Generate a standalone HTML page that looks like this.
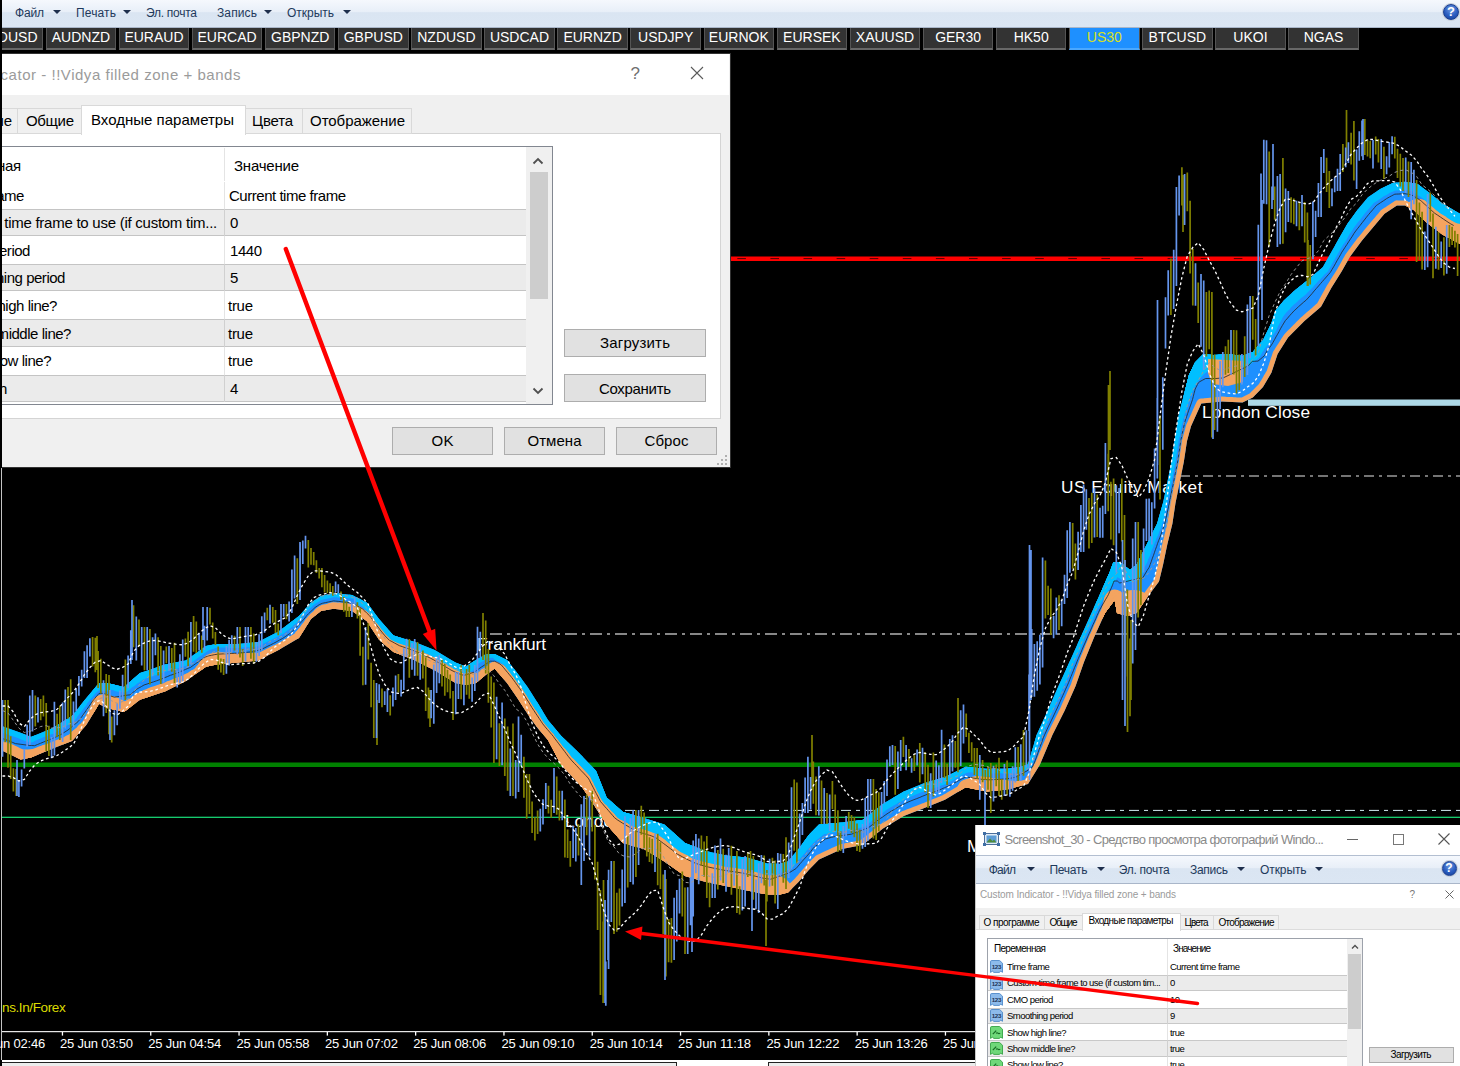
<!DOCTYPE html>
<html lang="ru"><head><meta charset="utf-8"><title>US30 chart</title>
<style>
html,body{margin:0;padding:0;}
body{width:1460px;height:1066px;overflow:hidden;background:#000;position:relative;font-family:"Liberation Sans", sans-serif;}
div,span{box-sizing:border-box;}
.abs{position:absolute;}
svg{position:absolute;left:0;top:0;}
</style></head><body>
<div style="position:absolute;left:1.1px;top:468px;width:1.1px;height:592px;background:#c4c4c4;"></div><div style="position:absolute;left:2px;top:0px;width:1458px;height:27.5px;background:linear-gradient(#f5f8fd 0%,#e8eff8 43%,#dae5f2 47%,#dbe6f3 100%);border-bottom:1px solid #a9b6c9;"></div><span style="position:absolute;left:15px;top:5.0px;font-size:12px;line-height:16px;color:#1e395b;letter-spacing:-0.172px;white-space:nowrap;">Файл</span><span style="position:absolute;left:76px;top:5.0px;font-size:12px;line-height:16px;color:#1e395b;letter-spacing:0.138px;white-space:nowrap;">Печать</span><span style="position:absolute;left:146px;top:5.0px;font-size:12px;line-height:16px;color:#1e395b;letter-spacing:-0.262px;white-space:nowrap;">Эл. почта</span><span style="position:absolute;left:217px;top:5.0px;font-size:12px;line-height:16px;color:#1e395b;letter-spacing:0.125px;white-space:nowrap;">Запись</span><span style="position:absolute;left:287px;top:5.0px;font-size:12px;line-height:16px;color:#1e395b;letter-spacing:-0.023px;white-space:nowrap;">Открыть</span><div style="position:absolute;left:53px;top:9.8px;width:0;height:0;border-left:4px solid transparent;border-right:4px solid transparent;border-top:4.5px solid #1e2f4d;"></div><div style="position:absolute;left:123px;top:9.8px;width:0;height:0;border-left:4px solid transparent;border-right:4px solid transparent;border-top:4.5px solid #1e2f4d;"></div><div style="position:absolute;left:264px;top:9.8px;width:0;height:0;border-left:4px solid transparent;border-right:4px solid transparent;border-top:4.5px solid #1e2f4d;"></div><div style="position:absolute;left:343px;top:9.8px;width:0;height:0;border-left:4px solid transparent;border-right:4px solid transparent;border-top:4.5px solid #1e2f4d;"></div><div style="position:absolute;left:1443px;top:4px;width:16px;height:16px;border-radius:50%;background:radial-gradient(circle at 50% 30%,#6f9be0 0%,#2a5cc0 55%,#153d95 100%);border:1px solid #1b3f8f;box-shadow:0 0 0 1px #c4ccd8;color:#fff;font-weight:bold;font-size:13px;line-height:14px;text-align:center;">?</div><div style="position:absolute;left:2px;top:28px;width:40.5px;height:22px;background:#333333;border-bottom:2px solid #686868;border-right:1px solid #555;overflow:hidden;"><span style="position:absolute;right:4px;top:0px;font-size:14px;line-height:19px;color:#fff;white-space:nowrap;">AUDUSD</span></div><div style="position:absolute;left:45.6px;top:28px;width:70.6px;height:22px;background:#333333;border-bottom:2px solid #686868;border-left:1px solid #555;border-right:1px solid #555;text-align:center;font-size:14px;line-height:19px;color:#ffffff;">AUDNZD</div><div style="position:absolute;left:118.7px;top:28px;width:70.6px;height:22px;background:#333333;border-bottom:2px solid #686868;border-left:1px solid #555;border-right:1px solid #555;text-align:center;font-size:14px;line-height:19px;color:#ffffff;">EURAUD</div><div style="position:absolute;left:191.8px;top:28px;width:70.6px;height:22px;background:#333333;border-bottom:2px solid #686868;border-left:1px solid #555;border-right:1px solid #555;text-align:center;font-size:14px;line-height:19px;color:#ffffff;">EURCAD</div><div style="position:absolute;left:264.9px;top:28px;width:70.6px;height:22px;background:#333333;border-bottom:2px solid #686868;border-left:1px solid #555;border-right:1px solid #555;text-align:center;font-size:14px;line-height:19px;color:#ffffff;">GBPNZD</div><div style="position:absolute;left:338.0px;top:28px;width:70.6px;height:22px;background:#333333;border-bottom:2px solid #686868;border-left:1px solid #555;border-right:1px solid #555;text-align:center;font-size:14px;line-height:19px;color:#ffffff;">GBPUSD</div><div style="position:absolute;left:411.1px;top:28px;width:70.6px;height:22px;background:#333333;border-bottom:2px solid #686868;border-left:1px solid #555;border-right:1px solid #555;text-align:center;font-size:14px;line-height:19px;color:#ffffff;">NZDUSD</div><div style="position:absolute;left:484.2px;top:28px;width:70.6px;height:22px;background:#333333;border-bottom:2px solid #686868;border-left:1px solid #555;border-right:1px solid #555;text-align:center;font-size:14px;line-height:19px;color:#ffffff;">USDCAD</div><div style="position:absolute;left:557.3px;top:28px;width:70.6px;height:22px;background:#333333;border-bottom:2px solid #686868;border-left:1px solid #555;border-right:1px solid #555;text-align:center;font-size:14px;line-height:19px;color:#ffffff;">EURNZD</div><div style="position:absolute;left:630.4px;top:28px;width:70.6px;height:22px;background:#333333;border-bottom:2px solid #686868;border-left:1px solid #555;border-right:1px solid #555;text-align:center;font-size:14px;line-height:19px;color:#ffffff;">USDJPY</div><div style="position:absolute;left:703.5px;top:28px;width:70.6px;height:22px;background:#333333;border-bottom:2px solid #686868;border-left:1px solid #555;border-right:1px solid #555;text-align:center;font-size:14px;line-height:19px;color:#ffffff;">EURNOK</div><div style="position:absolute;left:776.6px;top:28px;width:70.6px;height:22px;background:#333333;border-bottom:2px solid #686868;border-left:1px solid #555;border-right:1px solid #555;text-align:center;font-size:14px;line-height:19px;color:#ffffff;">EURSEK</div><div style="position:absolute;left:849.7px;top:28px;width:70.6px;height:22px;background:#333333;border-bottom:2px solid #686868;border-left:1px solid #555;border-right:1px solid #555;text-align:center;font-size:14px;line-height:19px;color:#ffffff;">XAUUSD</div><div style="position:absolute;left:922.8px;top:28px;width:70.6px;height:22px;background:#333333;border-bottom:2px solid #686868;border-left:1px solid #555;border-right:1px solid #555;text-align:center;font-size:14px;line-height:19px;color:#ffffff;">GER30</div><div style="position:absolute;left:995.9px;top:28px;width:70.6px;height:22px;background:#333333;border-bottom:2px solid #686868;border-left:1px solid #555;border-right:1px solid #555;text-align:center;font-size:14px;line-height:19px;color:#ffffff;">HK50</div><div style="position:absolute;left:1069.0px;top:28px;width:70.6px;height:22px;background:#1e90ff;border-bottom:2px solid #4aa8ff;border-left:1px solid #555;border-right:1px solid #555;text-align:center;font-size:14px;line-height:19px;color:#d8e020;">US30</div><div style="position:absolute;left:1142.1px;top:28px;width:70.6px;height:22px;background:#333333;border-bottom:2px solid #686868;border-left:1px solid #555;border-right:1px solid #555;text-align:center;font-size:14px;line-height:19px;color:#ffffff;">BTCUSD</div><div style="position:absolute;left:1215.2px;top:28px;width:70.6px;height:22px;background:#333333;border-bottom:2px solid #686868;border-left:1px solid #555;border-right:1px solid #555;text-align:center;font-size:14px;line-height:19px;color:#ffffff;">UKOI</div><div style="position:absolute;left:1288.3px;top:28px;width:70.6px;height:22px;background:#333333;border-bottom:2px solid #686868;border-left:1px solid #555;border-right:1px solid #555;text-align:center;font-size:14px;line-height:19px;color:#ffffff;">NGAS</div><div style="position:absolute;left:2px;top:1059.7px;width:973px;height:6.3px;background:#fff;"></div><div style="position:absolute;left:2px;top:1062px;width:675px;height:4px;border-top:1.6px solid #222;border-right:1.7px solid #222;background:#ececec;"></div><div style="position:absolute;left:768.2px;top:1062px;width:206.8px;height:4px;border-top:1.6px solid #222;border-left:1.7px solid #222;background:#ececec;"></div><svg width="1460" height="1066" viewBox="0 0 1460 1066" style="z-index:1"><rect x="730" y="256.5" width="730" height="4.5" fill="#ff0000"/><line x1="737.3" y1="258.6" x2="1460" y2="258.6" stroke="#4a0000" stroke-width="1" stroke-dasharray="8.6 24.5"/><rect x="2" y="762.5" width="1458" height="4.5" fill="#008000"/><rect x="2" y="816.7" width="1458" height="1.2" fill="#19e07a"/><rect x="1248" y="399.5" width="212" height="6.3" fill="#add8e6"/><line x1="490" y1="634" x2="1460" y2="634" stroke="#b4b4b4" stroke-width="1.6" stroke-dasharray="12 5 3 5"/><line x1="625" y1="810.4" x2="1460" y2="810.4" stroke="#d4ecf4" stroke-width="1" stroke-dasharray="10 5 4 5"/><line x1="1180" y1="476" x2="1460" y2="476" stroke="#e8e8e8" stroke-width="1.1" stroke-dasharray="10 5 3 5"/><clipPath id="bandclip"><polygon points="2.0,726.0 3.0,726.5 20.6,732.7 31.0,737.0 51.6,728.6 72.0,716.0 86.7,697.6 99.0,683.0 107.0,683.0 124.0,687.0 140.0,673.0 165.0,664.6 185.7,660.5 206.0,646.0 216.6,644.0 237.0,644.0 258.0,642.0 278.5,631.6 299.0,616.0 311.0,602.5 321.0,596.0 333.6,593.0 352.0,595.0 366.7,602.5 379.0,619.0 393.5,635.5 414.0,641.7 434.7,650.0 455.4,662.4 465.7,666.5 476.0,660.0 486.0,654.0 494.6,654.0 507.0,660.0 517.0,672.7 527.6,687.0 538.0,703.6 548.0,720.0 561.0,735.7 582.0,756.0 596.0,770.8 606.7,797.6 623.0,812.0 643.8,818.0 664.4,824.4 685.0,843.0 705.7,851.0 726.0,855.4 747.0,857.4 767.6,863.6 780.0,864.0 788.0,861.6 798.5,849.0 809.0,834.7 819.0,824.4 842.0,822.4 862.5,820.0 883.0,803.8 903.8,791.4 924.4,783.0 945.0,777.0 965.7,766.7 986.0,768.7 1007.0,768.7 1020.0,767.0 1028.0,764.4 1036.6,735.0 1047.6,710.7 1058.5,686.0 1069.5,662.0 1080.5,637.6 1091.5,613.0 1102.4,588.8 1109.8,571.7 1113.4,562.0 1120.0,562.0 1130.0,570.0 1136.6,564.4 1146.7,544.4 1157.0,523.8 1163.0,503.0 1167.3,482.5 1171.4,462.0 1174.5,441.0 1178.6,416.0 1183.7,395.4 1189.0,374.7 1195.0,362.4 1203.3,354.0 1213.6,355.0 1228.0,354.0 1242.5,356.0 1252.8,352.0 1263.0,339.7 1271.4,323.0 1275.5,310.8 1283.8,300.5 1294.0,291.0 1308.0,280.0 1322.6,267.5 1330.8,253.0 1339.0,238.6 1347.3,224.0 1357.6,209.7 1368.0,197.3 1380.3,189.0 1392.7,182.9 1405.0,181.8 1417.5,183.9 1430.0,193.2 1442.3,203.5 1460.0,213.8 1460.0,244.0 1442.3,234.5 1425.8,222.0 1413.4,209.7 1405.0,205.6 1396.9,205.6 1384.5,213.8 1372.5,228.0 1362.0,240.6 1349.8,257.0 1341.6,271.6 1331.3,288.0 1321.0,306.7 1304.4,321.0 1288.0,337.6 1277.6,354.0 1271.4,372.7 1263.0,387.0 1252.8,397.4 1242.5,402.6 1222.0,401.6 1201.3,403.6 1191.0,426.3 1187.0,441.0 1183.8,462.0 1179.7,482.5 1175.5,503.0 1172.4,523.8 1167.3,544.4 1163.0,565.0 1159.0,581.6 1146.7,598.0 1136.6,613.0 1127.0,616.0 1117.0,613.0 1114.6,600.0 1105.0,613.0 1094.0,637.6 1084.0,662.0 1075.6,686.0 1064.6,710.7 1052.4,735.0 1040.0,764.4 1028.0,784.0 1020.0,786.0 1007.0,789.4 986.0,791.4 965.7,787.3 945.0,799.7 924.4,808.0 903.8,816.0 883.0,828.6 862.5,845.0 842.0,849.0 819.0,859.5 809.0,869.8 798.5,882.0 788.0,892.5 780.0,894.6 767.6,894.6 747.0,890.5 726.0,886.0 705.7,882.0 685.0,876.0 664.4,861.6 643.8,849.0 623.0,843.0 606.7,824.4 596.0,808.0 582.0,787.0 561.0,764.6 548.0,740.0 538.0,728.4 527.6,714.0 517.0,697.4 507.0,683.0 494.6,668.5 486.0,674.7 476.0,683.0 465.7,685.0 455.4,683.0 434.7,670.6 414.0,660.0 393.5,652.0 379.0,639.7 366.7,621.0 352.0,611.0 333.6,608.7 321.0,611.0 311.0,619.0 299.0,638.0 278.5,650.0 258.0,660.5 237.0,662.5 216.6,664.6 206.0,666.7 185.7,681.0 165.0,691.4 140.0,699.7 124.0,712.0 107.0,708.0 99.0,703.8 86.7,724.4 72.0,741.0 51.6,749.0 31.0,757.4 20.6,759.5 3.0,751.0 2.0,751.0"/></clipPath><polygon points="2.0,726.0 3.0,726.5 20.6,732.7 31.0,737.0 51.6,728.6 72.0,716.0 86.7,697.6 99.0,683.0 107.0,683.0 124.0,687.0 140.0,673.0 165.0,664.6 185.7,660.5 206.0,646.0 216.6,644.0 237.0,644.0 258.0,642.0 278.5,631.6 299.0,616.0 311.0,602.5 321.0,596.0 333.6,593.0 352.0,595.0 366.7,602.5 379.0,619.0 393.5,635.5 414.0,641.7 434.7,650.0 455.4,662.4 465.7,666.5 476.0,660.0 486.0,654.0 494.6,654.0 507.0,660.0 517.0,672.7 527.6,687.0 538.0,703.6 548.0,720.0 561.0,735.7 582.0,756.0 596.0,770.8 606.7,797.6 623.0,812.0 643.8,818.0 664.4,824.4 685.0,843.0 705.7,851.0 726.0,855.4 747.0,857.4 767.6,863.6 780.0,864.0 788.0,861.6 798.5,849.0 809.0,834.7 819.0,824.4 842.0,822.4 862.5,820.0 883.0,803.8 903.8,791.4 924.4,783.0 945.0,777.0 965.7,766.7 986.0,768.7 1007.0,768.7 1020.0,767.0 1028.0,764.4 1036.6,735.0 1047.6,710.7 1058.5,686.0 1069.5,662.0 1080.5,637.6 1091.5,613.0 1102.4,588.8 1109.8,571.7 1113.4,562.0 1120.0,562.0 1130.0,570.0 1136.6,564.4 1146.7,544.4 1157.0,523.8 1163.0,503.0 1167.3,482.5 1171.4,462.0 1174.5,441.0 1178.6,416.0 1183.7,395.4 1189.0,374.7 1195.0,362.4 1203.3,354.0 1213.6,355.0 1228.0,354.0 1242.5,356.0 1252.8,352.0 1263.0,339.7 1271.4,323.0 1275.5,310.8 1283.8,300.5 1294.0,291.0 1308.0,280.0 1322.6,267.5 1330.8,253.0 1339.0,238.6 1347.3,224.0 1357.6,209.7 1368.0,197.3 1380.3,189.0 1392.7,182.9 1405.0,181.8 1417.5,183.9 1430.0,193.2 1442.3,203.5 1460.0,213.8 1460.0,244.0 1442.3,234.5 1425.8,222.0 1413.4,209.7 1405.0,205.6 1396.9,205.6 1384.5,213.8 1372.5,228.0 1362.0,240.6 1349.8,257.0 1341.6,271.6 1331.3,288.0 1321.0,306.7 1304.4,321.0 1288.0,337.6 1277.6,354.0 1271.4,372.7 1263.0,387.0 1252.8,397.4 1242.5,402.6 1222.0,401.6 1201.3,403.6 1191.0,426.3 1187.0,441.0 1183.8,462.0 1179.7,482.5 1175.5,503.0 1172.4,523.8 1167.3,544.4 1163.0,565.0 1159.0,581.6 1146.7,598.0 1136.6,613.0 1127.0,616.0 1117.0,613.0 1114.6,600.0 1105.0,613.0 1094.0,637.6 1084.0,662.0 1075.6,686.0 1064.6,710.7 1052.4,735.0 1040.0,764.4 1028.0,784.0 1020.0,786.0 1007.0,789.4 986.0,791.4 965.7,787.3 945.0,799.7 924.4,808.0 903.8,816.0 883.0,828.6 862.5,845.0 842.0,849.0 819.0,859.5 809.0,869.8 798.5,882.0 788.0,892.5 780.0,894.6 767.6,894.6 747.0,890.5 726.0,886.0 705.7,882.0 685.0,876.0 664.4,861.6 643.8,849.0 623.0,843.0 606.7,824.4 596.0,808.0 582.0,787.0 561.0,764.6 548.0,740.0 538.0,728.4 527.6,714.0 517.0,697.4 507.0,683.0 494.6,668.5 486.0,674.7 476.0,683.0 465.7,685.0 455.4,683.0 434.7,670.6 414.0,660.0 393.5,652.0 379.0,639.7 366.7,621.0 352.0,611.0 333.6,608.7 321.0,611.0 311.0,619.0 299.0,638.0 278.5,650.0 258.0,660.5 237.0,662.5 216.6,664.6 206.0,666.7 185.7,681.0 165.0,691.4 140.0,699.7 124.0,712.0 107.0,708.0 99.0,703.8 86.7,724.4 72.0,741.0 51.6,749.0 31.0,757.4 20.6,759.5 3.0,751.0 2.0,751.0" fill="#1e90ff"/><g clip-path="url(#bandclip)"><path d="M309.3 621.7L311.0 619.0M311.0 619.0L313.5 617.0" stroke="#f4a460" stroke-width="8.0" stroke-linecap="round" fill="none"/><path d="M305.9 627.1L307.6 624.4M307.6 624.4L309.3 621.7M313.5 617.0L316.0 615.0M316.0 615.0L318.5 613.0" stroke="#f4a460" stroke-width="9.0" stroke-linecap="round" fill="none"/><path d="M82.5 729.1L84.6 726.8M84.6 726.8L86.7 724.4M86.7 724.4L88.5 721.5M88.5 721.5L90.2 718.5M90.2 718.5L92.0 715.6M193.3 675.6L195.8 673.9M195.8 673.9L198.4 672.1M198.4 672.1L200.9 670.3M302.4 632.6L304.1 629.9M304.1 629.9L305.9 627.1M318.5 613.0L321.0 611.0M321.0 611.0L324.1 610.4M780.0 894.6L784.0 893.5M784.0 893.5L788.0 892.5M788.0 892.5L790.6 889.9M790.6 889.9L793.2 887.2M793.2 887.2L795.9 884.6M795.9 884.6L798.5 882.0M798.5 882.0L800.6 879.6M800.6 879.6L802.7 877.1M802.7 877.1L804.8 874.7M804.8 874.7L806.9 872.2M806.9 872.2L809.0 869.8M809.0 869.8L811.5 867.2M811.5 867.2L814.0 864.6M814.0 864.6L816.5 862.1M816.5 862.1L819.0 859.5M819.0 859.5L821.9 858.2M821.9 858.2L824.8 856.9M824.8 856.9L827.6 855.6M827.6 855.6L830.5 854.2M830.5 854.2L833.4 852.9M833.4 852.9L836.2 851.6M836.2 851.6L839.1 850.3M839.1 850.3L842.0 849.0M842.0 849.0L845.4 848.3M845.4 848.3L848.8 847.7M848.8 847.7L852.2 847.0M852.2 847.0L855.7 846.3M855.7 846.3L859.1 845.7M859.1 845.7L862.5 845.0M862.5 845.0L865.1 843.0M865.1 843.0L867.6 840.9M867.6 840.9L870.2 838.9M870.2 838.9L872.8 836.8M872.8 836.8L875.3 834.8M875.3 834.8L877.9 832.7M877.9 832.7L880.4 830.6M880.4 830.6L883.0 828.6M883.0 828.6L885.6 827.0M885.6 827.0L888.2 825.5M888.2 825.5L890.8 823.9M890.8 823.9L893.4 822.3M893.4 822.3L896.0 820.7M896.0 820.7L898.6 819.1M898.6 819.1L901.2 817.6M901.2 817.6L903.8 816.0M903.8 816.0L906.7 814.9M906.7 814.9L909.7 813.7M909.7 813.7L912.6 812.6M912.6 812.6L915.6 811.4M915.6 811.4L918.5 810.3M918.5 810.3L921.5 809.1M921.5 809.1L924.4 808.0M924.4 808.0L927.3 806.8M927.3 806.8L930.3 805.6M930.3 805.6L933.2 804.4M933.2 804.4L936.2 803.3M936.2 803.3L939.1 802.1M939.1 802.1L942.1 800.9M942.1 800.9L945.0 799.7M945.0 799.7L947.6 798.2M947.6 798.2L950.2 796.6M950.2 796.6L952.8 795.0M952.8 795.0L955.4 793.5M955.4 793.5L957.9 792.0M957.9 792.0L960.5 790.4M960.5 790.4L963.1 788.8M1020.0 786.0L1024.0 785.0M1024.0 785.0L1028.0 784.0M1028.0 784.0L1029.7 781.2M1029.7 781.2L1031.4 778.4M1031.4 778.4L1033.1 775.6M1033.1 775.6L1034.9 772.8M1034.9 772.8L1036.6 770.0M1036.6 770.0L1038.3 767.2M1038.3 767.2L1040.0 764.4M1040.0 764.4L1041.2 761.5M1041.2 761.5L1042.5 758.5M1042.5 758.5L1043.7 755.6M1043.7 755.6L1045.0 752.6M1045.0 752.6L1046.2 749.7M1046.2 749.7L1047.4 746.8M1047.4 746.8L1048.7 743.8M1048.7 743.8L1049.9 740.9M1049.9 740.9L1051.2 737.9M1051.2 737.9L1052.4 735.0M1052.4 735.0L1053.8 732.3M1053.8 732.3L1055.1 729.6M1055.1 729.6L1056.5 726.9M1056.5 726.9L1057.8 724.2M1057.8 724.2L1059.2 721.5M1059.2 721.5L1060.5 718.8M1060.5 718.8L1061.9 716.1M1061.9 716.1L1063.2 713.4M1063.2 713.4L1064.6 710.7M1064.6 710.7L1065.8 708.0M1065.8 708.0L1067.0 705.2M1067.0 705.2L1068.3 702.5M1068.3 702.5L1069.5 699.7M1069.5 699.7L1070.7 697.0M1070.7 697.0L1071.9 694.2M1071.9 694.2L1073.2 691.5M1073.2 691.5L1074.4 688.7M1074.4 688.7L1075.6 686.0M1075.6 686.0L1076.6 683.0M1076.6 683.0L1077.7 680.0M1077.7 680.0L1078.8 677.0M1078.8 677.0L1079.8 674.0M1079.8 674.0L1080.8 671.0M1080.8 671.0L1081.9 668.0M1081.9 668.0L1083.0 665.0M1083.0 665.0L1084.0 662.0M1084.0 662.0L1085.2 659.0M1085.2 659.0L1086.5 655.9M1086.5 655.9L1087.8 652.9M1087.8 652.9L1089.0 649.8M1089.0 649.8L1090.2 646.8M1090.2 646.8L1091.5 643.7M1091.5 643.7L1092.8 640.6M1092.8 640.6L1094.0 637.6M1094.0 637.6L1095.4 634.5M1095.4 634.5L1096.8 631.5M1096.8 631.5L1098.1 628.4M1098.1 628.4L1099.5 625.3M1099.5 625.3L1100.9 622.2M1100.9 622.2L1102.2 619.1M1102.2 619.1L1103.6 616.1M1103.6 616.1L1105.0 613.0M1105.0 613.0L1106.9 610.4M1106.9 610.4L1108.8 607.8M1108.8 607.8L1110.8 605.2M1138.3 610.5L1140.0 608.0M1140.0 608.0L1141.7 605.5M1141.7 605.5L1143.3 603.0M1143.3 603.0L1145.0 600.5M1145.0 600.5L1146.7 598.0M1146.7 598.0L1148.8 595.3M1148.8 595.3L1150.8 592.5M1150.8 592.5L1152.8 589.8M1152.8 589.8L1154.9 587.1M1154.9 587.1L1157.0 584.3M1157.0 584.3L1159.0 581.6M1159.0 581.6L1159.8 578.3M1159.8 578.3L1160.6 575.0M1160.6 575.0L1161.4 571.6M1161.4 571.6L1162.2 568.3M1162.2 568.3L1163.0 565.0M1163.0 565.0L1163.6 562.1M1163.6 562.1L1164.2 559.1M1164.2 559.1L1164.8 556.2M1164.8 556.2L1165.5 553.2M1165.5 553.2L1166.1 550.3M1166.1 550.3L1166.7 547.3M1166.7 547.3L1167.3 544.4M1167.3 544.4L1168.0 541.5M1168.0 541.5L1168.8 538.5M1168.8 538.5L1169.5 535.6M1169.5 535.6L1170.2 532.6M1170.2 532.6L1170.9 529.7M1170.9 529.7L1171.7 526.7M1171.7 526.7L1172.4 523.8M1172.4 523.8L1172.8 520.8M1172.8 520.8L1173.3 517.9M1173.3 517.9L1173.7 514.9M1173.7 514.9L1174.2 511.9M1174.2 511.9L1174.6 508.9M1174.6 508.9L1175.1 506.0M1175.1 506.0L1175.5 503.0M1175.5 503.0L1176.2 499.6M1176.2 499.6L1176.9 496.2M1176.9 496.2L1177.6 492.8M1177.6 492.8L1178.3 489.3M1178.3 489.3L1179.0 485.9M1179.0 485.9L1179.7 482.5M1179.7 482.5L1180.4 479.1M1180.4 479.1L1181.1 475.7M1181.1 475.7L1181.8 472.2M1181.8 472.2L1182.4 468.8M1182.4 468.8L1183.1 465.4M1183.1 465.4L1183.8 462.0M1183.8 462.0L1184.3 459.0M1184.3 459.0L1184.7 456.0M1184.7 456.0L1185.2 453.0M1185.2 453.0L1185.6 450.0M1185.6 450.0L1186.1 447.0M1186.1 447.0L1186.5 444.0M1186.5 444.0L1187.0 441.0M1187.0 441.0L1187.8 438.1M1187.8 438.1L1188.6 435.1M1188.6 435.1L1189.4 432.2M1189.4 432.2L1190.2 429.2M1190.2 429.2L1191.0 426.3M1191.0 426.3L1192.3 423.5M1192.3 423.5L1193.6 420.6M1193.6 420.6L1194.9 417.8M1194.9 417.8L1196.2 415.0M1196.2 415.0L1197.4 412.1M1197.4 412.1L1198.7 409.3M1198.7 409.3L1200.0 406.4M1200.0 406.4L1201.3 403.6M1201.3 403.6L1204.8 403.3M1204.8 403.3L1208.2 402.9M1208.2 402.9L1211.7 402.6M1211.7 402.6L1215.1 402.3M1215.1 402.3L1218.5 401.9M1218.5 401.9L1222.0 401.6M1222.0 401.6L1225.4 401.8M1225.4 401.8L1228.8 401.9M1228.8 401.9L1232.2 402.1M1232.2 402.1L1235.7 402.3M1235.7 402.3L1239.1 402.4M1239.1 402.4L1242.5 402.6M1242.5 402.6L1245.9 400.9M1245.9 400.9L1249.4 399.1M1249.4 399.1L1252.8 397.4M1252.8 397.4L1255.3 394.8M1255.3 394.8L1257.9 392.2M1257.9 392.2L1260.5 389.6M1260.5 389.6L1263.0 387.0M1263.0 387.0L1264.7 384.1M1264.7 384.1L1266.4 381.3M1266.4 381.3L1268.0 378.4M1268.0 378.4L1269.7 375.6M1269.7 375.6L1271.4 372.7M1271.4 372.7L1272.4 369.6M1272.4 369.6L1273.5 366.5M1273.5 366.5L1274.5 363.4M1274.5 363.4L1275.5 360.2M1275.5 360.2L1276.6 357.1M1276.6 357.1L1277.6 354.0M1277.6 354.0L1279.3 351.3M1279.3 351.3L1281.1 348.5M1281.1 348.5L1282.8 345.8M1282.8 345.8L1284.5 343.1M1284.5 343.1L1286.3 340.3M1286.3 340.3L1288.0 337.6M1288.0 337.6L1290.3 335.2M1290.3 335.2L1292.7 332.9M1292.7 332.9L1295.0 330.5M1295.0 330.5L1297.4 328.1M1297.4 328.1L1299.7 325.7M1299.7 325.7L1302.1 323.4M1302.1 323.4L1304.4 321.0M1304.4 321.0L1306.8 319.0M1306.8 319.0L1309.1 316.9M1309.1 316.9L1311.5 314.9M1311.5 314.9L1313.9 312.8M1313.9 312.8L1316.3 310.8M1316.3 310.8L1318.6 308.7M1318.6 308.7L1321.0 306.7M1321.0 306.7L1322.5 304.0M1322.5 304.0L1323.9 301.4M1323.9 301.4L1325.4 298.7M1325.4 298.7L1326.9 296.0M1326.9 296.0L1328.4 293.3M1328.4 293.3L1329.8 290.7M1329.8 290.7L1331.3 288.0M1331.3 288.0L1333.0 285.3M1333.0 285.3L1334.7 282.5M1334.7 282.5L1336.4 279.8M1336.4 279.8L1338.2 277.1M1338.2 277.1L1339.9 274.3M1339.9 274.3L1341.6 271.6M1341.6 271.6L1343.2 268.7M1343.2 268.7L1344.9 265.8M1344.9 265.8L1346.5 262.8M1346.5 262.8L1348.2 259.9M1348.2 259.9L1349.8 257.0M1349.8 257.0L1351.8 254.3M1351.8 254.3L1353.9 251.5M1353.9 251.5L1355.9 248.8M1355.9 248.8L1357.9 246.1M1357.9 246.1L1360.0 243.3M1360.0 243.3L1362.0 240.6M1362.0 240.6L1364.1 238.1M1364.1 238.1L1366.2 235.6M1366.2 235.6L1368.3 233.0M1368.3 233.0L1370.4 230.5M1370.4 230.5L1372.5 228.0M1372.5 228.0L1374.5 225.6M1374.5 225.6L1376.5 223.3M1376.5 223.3L1378.5 220.9M1378.5 220.9L1380.5 218.5M1380.5 218.5L1382.5 216.2M1382.5 216.2L1384.5 213.8M1384.5 213.8L1387.6 211.8M1387.6 211.8L1390.7 209.7M1390.7 209.7L1393.8 207.7M1393.8 207.7L1396.9 205.6M1396.9 205.6L1401.0 205.6M1401.0 205.6L1405.0 205.6M1405.0 205.6L1407.8 207.0M1407.8 207.0L1410.6 208.3M1410.6 208.3L1413.4 209.7" stroke="#f4a460" stroke-width="10.0" stroke-linecap="round" fill="none"/><path d="M78.3 733.9L80.4 731.5M80.4 731.5L82.5 729.1M92.0 715.6L93.7 712.6M93.7 712.6L95.5 709.7M188.2 679.2L190.8 677.4M190.8 677.4L193.3 675.6M300.7 635.3L302.4 632.6M1016.8 786.9L1020.0 786.0M1110.8 605.2L1112.7 602.6" stroke="#f4a460" stroke-width="11.0" stroke-linecap="round" fill="none"/><path d="M76.2 736.3L78.3 733.9M95.5 709.7L97.2 706.7M185.7 681.0L188.2 679.2M200.9 670.3L203.5 668.5M275.6 651.5L278.5 650.0M278.5 650.0L281.4 648.3M281.4 648.3L284.4 646.6M284.4 646.6L287.3 644.9M287.3 644.9L290.2 643.1M290.2 643.1L293.1 641.4M293.1 641.4L296.1 639.7M296.1 639.7L299.0 638.0M299.0 638.0L300.7 635.3M324.1 610.4L327.3 609.9M327.3 609.9L330.5 609.3M491.7 670.6L494.6 668.5M963.1 788.8L965.7 787.3M1013.5 787.7L1016.8 786.9" stroke="#f4a460" stroke-width="12.0" stroke-linecap="round" fill="none"/><path d="M45.7 751.4L48.7 750.2M48.7 750.2L51.6 749.0M51.6 749.0L54.5 747.9M54.5 747.9L57.4 746.7M57.4 746.7L60.3 745.6M60.3 745.6L63.3 744.4M63.3 744.4L66.2 743.3M66.2 743.3L69.1 742.1M72.0 741.0L74.1 738.6M74.1 738.6L76.2 736.3M97.2 706.7L99.0 703.8M179.8 684.0L182.7 682.5M182.7 682.5L185.7 681.0M203.5 668.5L206.0 666.7M260.9 659.0L263.9 657.5M263.9 657.5L266.8 656.0M266.8 656.0L269.7 654.5M269.7 654.5L272.6 653.0M272.6 653.0L275.6 651.5M330.5 609.3L333.6 608.7M333.6 608.7L336.7 609.1M336.7 609.1L339.7 609.5M348.9 610.6L352.0 611.0M486.0 674.7L488.9 672.6M488.9 672.6L491.7 670.6" stroke="#f4a460" stroke-width="13.0" stroke-linecap="round" fill="none"/><path d="M33.9 756.2L36.9 755.0M36.9 755.0L39.8 753.8M39.8 753.8L42.8 752.6M42.8 752.6L45.7 751.4M69.1 742.1L72.0 741.0M132.0 705.9L134.7 703.8M134.7 703.8L137.3 701.8M137.3 701.8L140.0 699.7M140.0 699.7L143.1 698.7M176.8 685.5L179.8 684.0M258.0 660.5L260.9 659.0M339.7 609.5L342.8 609.9M342.8 609.9L345.9 610.2M345.9 610.2L348.9 610.6M352.0 611.0L354.9 613.0M366.7 621.0L368.5 623.7M478.5 680.9L481.0 678.9M481.0 678.9L483.5 676.8M483.5 676.8L486.0 674.7M494.6 668.5L496.7 670.9M1010.2 788.5L1013.5 787.7M1413.4 209.7L1415.9 212.2" stroke="#f4a460" stroke-width="14.0" stroke-linecap="round" fill="none"/><path d="M31.0 757.4L33.9 756.2M99.0 703.8L101.7 705.2M129.3 707.9L132.0 705.9M143.1 698.7L146.2 697.6M170.9 688.4L173.9 686.9M173.9 686.9L176.8 685.5M255.0 660.8L258.0 660.5M363.8 619.0L366.7 621.0M368.5 623.7L370.2 626.3M370.2 626.3L372.0 629.0M965.7 787.3L969.1 788.0" stroke="#f4a460" stroke-width="15.0" stroke-linecap="round" fill="none"/><path d="M27.5 758.1L31.0 757.4M126.7 710.0L129.3 707.9M146.2 697.6L149.4 696.6M149.4 696.6L152.5 695.5M161.9 692.4L165.0 691.4M165.0 691.4L168.0 689.9M168.0 689.9L170.9 688.4M206.0 666.7L209.5 666.0M249.0 661.4L252.0 661.1M252.0 661.1L255.0 660.8M354.9 613.0L357.9 615.0M357.9 615.0L360.8 617.0M360.8 617.0L363.8 619.0M372.0 629.0L373.7 631.7M373.7 631.7L375.5 634.4M383.8 643.8L386.2 645.9M386.2 645.9L388.7 647.9M476.0 683.0L478.5 680.9M544.0 735.4L546.0 737.7M546.0 737.7L548.0 740.0M1007.0 789.4L1010.2 788.5M1112.7 602.6L1114.6 600.0" stroke="#f4a460" stroke-width="16.0" stroke-linecap="round" fill="none"/><path d="M24.1 758.8L27.5 758.1M124.0 712.0L126.7 710.0M152.5 695.5L155.6 694.5M155.6 694.5L158.8 693.5M158.8 693.5L161.9 692.4M243.0 661.9L246.0 661.6M246.0 661.6L249.0 661.4M375.5 634.4L377.2 637.0M377.2 637.0L379.0 639.7M379.0 639.7L381.4 641.8M381.4 641.8L383.8 643.8M496.7 670.9L498.7 673.3M531.8 719.8L533.8 722.6M533.8 722.6L535.9 725.5M535.9 725.5L538.0 728.4M538.0 728.4L540.0 730.7M540.0 730.7L542.0 733.0M542.0 733.0L544.0 735.4M548.0 740.0L549.4 742.7" stroke="#f4a460" stroke-width="17.0" stroke-linecap="round" fill="none"/><path d="M237.0 662.5L240.0 662.2M240.0 662.2L243.0 661.9M388.7 647.9L391.1 650.0M502.9 678.2L504.9 680.6M504.9 680.6L507.0 683.0M507.0 683.0L509.0 685.9M509.0 685.9L511.0 688.8M511.0 688.8L513.0 691.6M520.5 702.9L522.3 705.7M522.3 705.7L524.1 708.5M524.1 708.5L525.8 711.2M525.8 711.2L527.6 714.0M527.6 714.0L529.7 716.9M529.7 716.9L531.8 719.8M549.4 742.7L550.9 745.5M1004.0 789.7L1007.0 789.4" stroke="#f4a460" stroke-width="18.0" stroke-linecap="round" fill="none"/><path d="M2.0 751.0L3.0 751.0M3.0 751.0L5.9 752.4M5.9 752.4L8.9 753.8M17.7 758.1L20.6 759.5M20.6 759.5L24.1 758.8M120.6 711.2L124.0 712.0M233.6 662.9L237.0 662.5M391.1 650.0L393.5 652.0M472.6 683.7L476.0 683.0M498.7 673.3L500.8 675.8M500.8 675.8L502.9 678.2M513.0 691.6L515.0 694.5M515.0 694.5L517.0 697.4M517.0 697.4L518.8 700.2M518.8 700.2L520.5 702.9M550.9 745.5L552.3 748.2M592.5 802.8L594.2 805.4M594.2 805.4L596.0 808.0M969.1 788.0L972.5 788.7" stroke="#f4a460" stroke-width="19.0" stroke-linecap="round" fill="none"/><path d="M8.9 753.8L11.8 755.2M11.8 755.2L14.7 756.7M14.7 756.7L17.7 758.1M101.7 705.2L104.3 706.6M209.5 666.0L213.1 665.3M230.2 663.2L233.6 662.9M393.5 652.0L396.4 653.1M552.3 748.2L553.8 750.9M590.8 800.1L592.5 802.8M596.0 808.0L597.8 810.7M1001.0 790.0L1004.0 789.7" stroke="#f4a460" stroke-width="20.0" stroke-linecap="round" fill="none"/><path d="M117.2 710.4L120.6 711.2M226.8 663.5L230.2 663.2M396.4 653.1L399.4 654.3M399.4 654.3L402.3 655.4M402.3 655.4L405.2 656.6M553.8 750.9L555.2 753.7M587.2 794.9L589.0 797.5M589.0 797.5L590.8 800.1M597.8 810.7L599.6 813.5M1114.6 600.0L1115.2 603.2M1136.6 613.0L1138.3 610.5" stroke="#f4a460" stroke-width="21.0" stroke-linecap="round" fill="none"/><path d="M223.4 663.9L226.8 663.5M405.2 656.6L408.1 657.7M408.1 657.7L411.1 658.9M411.1 658.9L414.0 660.0M414.0 660.0L417.0 661.5M417.0 661.5L419.9 663.0M555.2 753.7L556.7 756.4M585.5 792.2L587.2 794.9M599.6 813.5L601.4 816.2M776.9 894.6L780.0 894.6M972.5 788.7L975.9 789.3M998.0 790.3L1001.0 790.0" stroke="#f4a460" stroke-width="22.0" stroke-linecap="round" fill="none"/><path d="M113.8 709.6L117.2 710.4M220.0 664.2L223.4 663.9M419.9 663.0L422.9 664.5M422.9 664.5L425.8 666.1M425.8 666.1L428.8 667.6M428.8 667.6L431.7 669.1M431.7 669.1L434.7 670.6M434.7 670.6L437.3 672.1M437.3 672.1L439.9 673.7M439.9 673.7L442.5 675.2M442.5 675.2L445.0 676.8M445.0 676.8L447.6 678.4M447.6 678.4L450.2 679.9M458.8 683.7L462.3 684.3M462.3 684.3L465.7 685.0M465.7 685.0L469.1 684.3M469.1 684.3L472.6 683.7M583.8 789.6L585.5 792.2M601.4 816.2L603.1 818.9M995.0 790.5L998.0 790.3M1415.9 212.2L1418.4 214.6" stroke="#f4a460" stroke-width="23.0" stroke-linecap="round" fill="none"/><path d="M213.1 665.3L216.6 664.6M216.6 664.6L220.0 664.2M450.2 679.9L452.8 681.5M452.8 681.5L455.4 683.0M455.4 683.0L458.8 683.7M556.7 756.4L558.1 759.1M582.0 787.0L583.8 789.6M603.1 818.9L604.9 821.7M992.0 790.8L995.0 790.5M1115.2 603.2L1115.8 606.5" stroke="#f4a460" stroke-width="24.0" stroke-linecap="round" fill="none"/><path d="M104.3 706.6L107.0 708.0M110.4 708.8L113.8 709.6M558.1 759.1L559.6 761.9M579.9 784.8L582.0 787.0M604.9 821.7L606.7 824.4M989.0 791.1L992.0 790.8" stroke="#f4a460" stroke-width="25.0" stroke-linecap="round" fill="none"/><path d="M107.0 708.0L110.4 708.8M559.6 761.9L561.0 764.6M577.8 782.5L579.9 784.8M606.7 824.4L608.7 826.7M608.7 826.7L610.8 829.0M975.9 789.3L979.2 790.0M1115.8 606.5L1116.4 609.8" stroke="#f4a460" stroke-width="26.0" stroke-linecap="round" fill="none"/><path d="M561.0 764.6L563.1 766.8M563.1 766.8L565.2 769.1M565.2 769.1L567.3 771.3M567.3 771.3L569.4 773.6M569.4 773.6L571.5 775.8M571.5 775.8L573.6 778.0M573.6 778.0L575.7 780.3M575.7 780.3L577.8 782.5M610.8 829.0L612.8 831.4M986.0 791.4L989.0 791.1" stroke="#f4a460" stroke-width="27.0" stroke-linecap="round" fill="none"/><path d="M979.2 790.0L982.6 790.7" stroke="#f4a460" stroke-width="28.0" stroke-linecap="round" fill="none"/><path d="M612.8 831.4L614.9 833.7M982.6 790.7L986.0 791.4M1116.4 609.8L1117.0 613.0" stroke="#f4a460" stroke-width="29.0" stroke-linecap="round" fill="none"/><path d="M614.9 833.7L616.9 836.0M773.8 894.6L776.9 894.6M1418.4 214.6L1420.8 217.1M1420.8 217.1L1423.3 219.5" stroke="#f4a460" stroke-width="31.0" stroke-linecap="round" fill="none"/><path d="M1117.0 613.0L1120.3 614.0M1423.3 219.5L1425.8 222.0M1425.8 222.0L1428.5 224.1M1428.5 224.1L1431.3 226.2M1431.3 226.2L1434.0 228.2" stroke="#f4a460" stroke-width="32.0" stroke-linecap="round" fill="none"/><path d="M616.9 836.0L618.9 838.4M1434.0 228.2L1436.8 230.3M1436.8 230.3L1439.5 232.4" stroke="#f4a460" stroke-width="33.0" stroke-linecap="round" fill="none"/><path d="M1439.5 232.4L1442.3 234.5M1442.3 234.5L1445.2 236.1M1445.2 236.1L1448.2 237.7M1448.2 237.7L1451.2 239.2" stroke="#f4a460" stroke-width="34.0" stroke-linecap="round" fill="none"/><path d="M618.9 838.4L621.0 840.7M664.4 861.6L667.0 863.4M667.0 863.4L669.5 865.2M669.5 865.2L672.1 867.0M672.1 867.0L674.7 868.8M1451.2 239.2L1454.1 240.8" stroke="#f4a460" stroke-width="35.0" stroke-linecap="round" fill="none"/><path d="M659.2 858.5L661.8 860.0M661.8 860.0L664.4 861.6M674.7 868.8L677.3 870.6M1120.3 614.0L1123.7 615.0M1454.1 240.8L1457.0 242.4" stroke="#f4a460" stroke-width="36.0" stroke-linecap="round" fill="none"/><path d="M621.0 840.7L623.0 843.0M656.7 856.9L659.2 858.5M677.3 870.6L679.9 872.4" stroke="#f4a460" stroke-width="37.0" stroke-linecap="round" fill="none"/><path d="M623.0 843.0L626.0 843.9M626.0 843.9L628.9 844.7M628.9 844.7L631.9 845.6M631.9 845.6L634.9 846.4M634.9 846.4L637.9 847.3M637.9 847.3L640.8 848.1M640.8 848.1L643.8 849.0M643.8 849.0L646.4 850.6M654.1 855.3L656.7 856.9M679.9 872.4L682.4 874.2M693.9 878.6L696.8 879.4M696.8 879.4L699.8 880.3M699.8 880.3L702.7 881.1M715.9 884.0L719.2 884.7M719.2 884.7L722.6 885.3M1133.4 614.0L1136.6 613.0M1457.0 242.4L1460.0 244.0" stroke="#f4a460" stroke-width="38.0" stroke-linecap="round" fill="none"/><path d="M646.4 850.6L648.9 852.1M648.9 852.1L651.5 853.7M651.5 853.7L654.1 855.3M682.4 874.2L685.0 876.0M685.0 876.0L688.0 876.9M688.0 876.9L690.9 877.7M690.9 877.7L693.9 878.6M702.7 881.1L705.7 882.0M705.7 882.0L709.1 882.7M709.1 882.7L712.5 883.3M712.5 883.3L715.9 884.0M722.6 885.3L726.0 886.0M726.0 886.0L729.0 886.6M755.8 892.3L758.8 892.8M758.8 892.8L761.7 893.4M761.7 893.4L764.7 894.0M764.7 894.0L767.6 894.6M770.7 894.6L773.8 894.6" stroke="#f4a460" stroke-width="39.0" stroke-linecap="round" fill="none"/><path d="M729.0 886.6L732.0 887.3M732.0 887.3L735.0 887.9M747.0 890.5L749.9 891.1M749.9 891.1L752.9 891.7M752.9 891.7L755.8 892.3M767.6 894.6L770.7 894.6" stroke="#f4a460" stroke-width="40.0" stroke-linecap="round" fill="none"/><path d="M735.0 887.9L738.0 888.6M738.0 888.6L741.0 889.2M741.0 889.2L744.0 889.9M744.0 889.9L747.0 890.5M1123.7 615.0L1127.0 616.0" stroke="#f4a460" stroke-width="41.0" stroke-linecap="round" fill="none"/><path d="M1127.0 616.0L1130.2 615.0" stroke="#f4a460" stroke-width="45.0" stroke-linecap="round" fill="none"/><path d="M1130.2 615.0L1133.4 614.0" stroke="#f4a460" stroke-width="48.0" stroke-linecap="round" fill="none"/></g><g clip-path="url(#bandclip)"><path d="M357.9 598.0L360.8 599.5M494.6 654.0L497.7 655.5" stroke="#00bfff" stroke-width="5.0" stroke-linecap="round" fill="none"/><path d="M299.0 616.0L301.0 613.8M301.0 613.8L303.0 611.5M303.0 611.5L305.0 609.2M305.0 609.2L307.0 607.0M307.0 607.0L309.0 604.8M352.0 595.0L354.9 596.5M354.9 596.5L357.9 598.0M470.9 663.2L473.4 661.6" stroke="#00bfff" stroke-width="6.0" stroke-linecap="round" fill="none"/><path d="M213.1 644.7L216.6 644.0M216.6 644.0L220.0 644.0M220.0 644.0L223.4 644.0M223.4 644.0L226.8 644.0M226.8 644.0L230.2 644.0M293.9 619.9L296.4 618.0M296.4 618.0L299.0 616.0M309.0 604.8L311.0 602.5M311.0 602.5L314.3 600.3M314.3 600.3L317.7 598.2M317.7 598.2L321.0 596.0M339.7 593.7L342.8 594.0M342.8 594.0L345.9 594.3M345.9 594.3L348.9 594.7M348.9 594.7L352.0 595.0M490.3 654.0L494.6 654.0M975.9 767.7L979.2 768.0M1028.0 764.4L1028.9 761.5" stroke="#00bfff" stroke-width="7.0" stroke-linecap="round" fill="none"/><path d="M82.5 702.9L84.6 700.2M84.6 700.2L86.7 697.6M86.7 697.6L88.8 695.2M88.8 695.2L90.8 692.7M90.8 692.7L92.8 690.3M92.8 690.3L94.9 687.9M99.0 683.0L103.0 683.0M107.0 683.0L110.4 683.8M209.5 645.3L213.1 644.7M230.2 644.0L233.6 644.0M233.6 644.0L237.0 644.0M237.0 644.0L240.0 643.7M240.0 643.7L243.0 643.4M243.0 643.4L246.0 643.1M246.0 643.1L249.0 642.9M255.0 642.3L258.0 642.0M258.0 642.0L260.9 640.5M260.9 640.5L263.9 639.0M263.9 639.0L266.8 637.5M266.8 637.5L269.7 636.1M269.7 636.1L272.6 634.6M272.6 634.6L275.6 633.1M275.6 633.1L278.5 631.6M278.5 631.6L281.1 629.6M288.8 623.8L291.3 621.9M291.3 621.9L293.9 619.9M321.0 596.0L324.1 595.2M324.1 595.2L327.3 594.5M327.3 594.5L330.5 593.8M330.5 593.8L333.6 593.0M333.6 593.0L336.7 593.3M336.7 593.3L339.7 593.7M372.9 610.8L374.9 613.5M374.9 613.5L376.9 616.2M376.9 616.2L379.0 619.0M473.4 661.6L476.0 660.0M486.0 654.0L490.3 654.0M972.5 767.4L975.9 767.7M986.0 768.7L989.0 768.7M989.0 768.7L992.0 768.7M992.0 768.7L995.0 768.7M1024.0 765.7L1028.0 764.4M1028.9 761.5L1029.7 758.5M1029.7 758.5L1030.6 755.6M1030.6 755.6L1031.4 752.6M1031.4 752.6L1032.3 749.7M1079.1 640.6L1080.5 637.6M1080.5 637.6L1081.9 634.5M1081.9 634.5L1083.2 631.5M1083.2 631.5L1084.6 628.4M1084.6 628.4L1086.0 625.3M1086.0 625.3L1087.4 622.2M1087.4 622.2L1088.8 619.1M1088.8 619.1L1090.1 616.1M1090.1 616.1L1091.5 613.0M1091.5 613.0L1092.9 610.0M1092.9 610.0L1094.2 607.0M1094.2 607.0L1095.6 603.9M1162.1 506.0L1163.0 503.0M1163.0 503.0L1163.7 499.6M1163.7 499.6L1164.4 496.2M1164.4 496.2L1165.2 492.8M1165.2 492.8L1165.9 489.3M1165.9 489.3L1166.6 485.9M1166.6 485.9L1167.3 482.5M1167.3 482.5L1168.0 479.1M1168.0 479.1L1168.7 475.7M1168.7 475.7L1169.3 472.2M1169.3 472.2L1170.0 468.8M1170.0 468.8L1170.7 465.4M1170.7 465.4L1171.4 462.0M1171.4 462.0L1171.8 459.0M1171.8 459.0L1172.3 456.0M1172.3 456.0L1172.7 453.0M1172.7 453.0L1173.2 450.0M1173.2 450.0L1173.6 447.0M1173.6 447.0L1174.1 444.0M1174.1 444.0L1174.5 441.0M1174.5 441.0L1175.0 437.9M1175.0 437.9L1175.5 434.8" stroke="#00bfff" stroke-width="8.0" stroke-linecap="round" fill="none"/><path d="M72.0 716.0L74.1 713.4M74.1 713.4L76.2 710.7M76.2 710.7L78.3 708.1M78.3 708.1L80.4 705.5M80.4 705.5L82.5 702.9M94.9 687.9L97.0 685.4M97.0 685.4L99.0 683.0M206.0 646.0L209.5 645.3M249.0 642.9L252.0 642.6M252.0 642.6L255.0 642.3M281.1 629.6L283.6 627.7M283.6 627.7L286.2 625.8M286.2 625.8L288.8 623.8M370.8 608.0L372.9 610.8M379.0 619.0L381.1 621.4M381.1 621.4L383.1 623.7M383.1 623.7L385.2 626.1M391.4 633.1L393.5 635.5M476.0 660.0L479.3 658.0M479.3 658.0L482.7 656.0M482.7 656.0L486.0 654.0M554.5 727.9L556.7 730.5M556.7 730.5L558.8 733.1M995.0 768.7L998.0 768.7M998.0 768.7L1001.0 768.7M1001.0 768.7L1004.0 768.7M1020.0 767.0L1024.0 765.7M1032.3 749.7L1033.2 746.8M1033.2 746.8L1034.0 743.8M1034.0 743.8L1034.9 740.9M1034.9 740.9L1035.7 737.9M1068.1 665.0L1069.5 662.0M1069.5 662.0L1070.9 659.0M1070.9 659.0L1072.2 655.9M1072.2 655.9L1073.6 652.9M1073.6 652.9L1075.0 649.8M1075.0 649.8L1076.4 646.8M1076.4 646.8L1077.8 643.7M1077.8 643.7L1079.1 640.6M1095.6 603.9L1097.0 600.9M1097.0 600.9L1098.3 597.9M1159.6 514.9L1160.4 511.9M1160.4 511.9L1161.3 508.9M1161.3 508.9L1162.1 506.0M1175.5 434.8L1176.0 431.6M1176.0 431.6L1176.5 428.5M1176.5 428.5L1177.1 425.4M1177.1 425.4L1177.6 422.2" stroke="#00bfff" stroke-width="9.0" stroke-linecap="round" fill="none"/><path d="M31.0 737.0L33.9 735.8M33.9 735.8L36.9 734.6M36.9 734.6L39.8 733.4M39.8 733.4L42.8 732.2M42.8 732.2L45.7 731.0M45.7 731.0L48.7 729.8M48.7 729.8L51.6 728.6M66.2 719.6L69.1 717.8M69.1 717.8L72.0 716.0M110.4 683.8L113.8 684.6M182.7 661.1L185.7 660.5M185.7 660.5L188.2 658.7M188.2 658.7L190.8 656.9M190.8 656.9L193.3 655.1M193.3 655.1L195.8 653.2M195.8 653.2L198.4 651.4M198.4 651.4L200.9 649.6M200.9 649.6L203.5 647.8M203.5 647.8L206.0 646.0M368.8 605.2L370.8 608.0M385.2 626.1L387.3 628.4M387.3 628.4L389.4 630.8M389.4 630.8L391.4 633.1M393.5 635.5L396.4 636.4M497.7 655.5L500.8 657.0M500.8 657.0L503.9 658.5M517.0 672.7L519.1 675.6M539.7 706.3L541.3 709.1M541.3 709.1L543.0 711.8M543.0 711.8L544.7 714.5M544.7 714.5L546.3 717.3M546.3 717.3L548.0 720.0M548.0 720.0L550.2 722.6M550.2 722.6L552.3 725.2M552.3 725.2L554.5 727.9M558.8 733.1L561.0 735.7M561.0 735.7L563.3 738.0M969.1 767.0L972.5 767.4M1004.0 768.7L1007.0 768.7M1007.0 768.7L1010.2 768.3M1010.2 768.3L1013.5 767.9M1016.8 767.4L1020.0 767.0M1035.7 737.9L1036.6 735.0M1036.6 735.0L1038.0 732.0M1038.0 732.0L1039.3 728.9M1039.3 728.9L1040.7 725.9M1040.7 725.9L1042.1 722.9M1042.1 722.9L1043.5 719.8M1043.5 719.8L1044.8 716.8M1044.8 716.8L1046.2 713.7M1046.2 713.7L1047.6 710.7M1047.6 710.7L1049.0 707.6M1049.0 707.6L1050.3 704.5M1050.3 704.5L1051.7 701.4M1051.7 701.4L1053.0 698.4M1053.0 698.4L1054.4 695.3M1054.4 695.3L1055.8 692.2M1055.8 692.2L1057.1 689.1M1057.1 689.1L1058.5 686.0M1058.5 686.0L1059.9 683.0M1059.9 683.0L1061.2 680.0M1061.2 680.0L1062.6 677.0M1062.6 677.0L1064.0 674.0M1064.0 674.0L1065.4 671.0M1065.4 671.0L1066.8 668.0M1066.8 668.0L1068.1 665.0M1098.3 597.9L1099.7 594.8M1099.7 594.8L1101.0 591.8M1155.5 526.7L1157.0 523.8M1157.0 523.8L1157.9 520.8M1157.9 520.8L1158.7 517.9M1158.7 517.9L1159.6 514.9M1177.6 422.2L1178.1 419.1M1178.1 419.1L1178.6 416.0" stroke="#00bfff" stroke-width="10.0" stroke-linecap="round" fill="none"/><path d="M27.5 735.6L31.0 737.0M51.6 728.6L54.5 726.8M54.5 726.8L57.4 725.0M57.4 725.0L60.3 723.2M60.3 723.2L63.3 721.4M63.3 721.4L66.2 719.6M113.8 684.6L117.2 685.4M120.6 686.2L124.0 687.0M124.0 687.0L126.3 685.0M126.3 685.0L128.6 683.0M128.6 683.0L130.9 681.0M176.8 662.3L179.8 661.7M179.8 661.7L182.7 661.1M360.8 599.5L363.8 601.0M363.8 601.0L366.7 602.5M366.7 602.5L368.8 605.2M396.4 636.4L399.4 637.3M503.9 658.5L507.0 660.0M507.0 660.0L509.0 662.5M509.0 662.5L511.0 665.1M511.0 665.1L513.0 667.6M513.0 667.6L515.0 670.2M515.0 670.2L517.0 672.7M519.1 675.6L521.2 678.4M521.2 678.4L523.4 681.3M523.4 681.3L525.5 684.1M525.5 684.1L527.6 687.0M527.6 687.0L529.3 689.8M529.3 689.8L531.1 692.5M531.1 692.5L532.8 695.3M532.8 695.3L534.5 698.1M534.5 698.1L536.3 700.8M536.3 700.8L538.0 703.6M538.0 703.6L539.7 706.3M563.3 738.0L565.7 740.2M605.5 794.6L606.7 797.6M606.7 797.6L609.0 799.7M965.7 766.7L969.1 767.0M1013.5 767.9L1016.8 767.4M1101.0 591.8L1102.4 588.8M1152.6 532.6L1154.1 529.7M1154.1 529.7L1155.5 526.7M1178.6 416.0L1179.3 413.1M1179.3 413.1L1180.1 410.1M1180.1 410.1L1180.8 407.2" stroke="#00bfff" stroke-width="11.0" stroke-linecap="round" fill="none"/><path d="M2.0 726.0L3.0 726.5M3.0 726.5L5.9 727.5M5.9 727.5L8.9 728.6M8.9 728.6L11.8 729.6M11.8 729.6L14.7 730.6M14.7 730.6L17.7 731.7M17.7 731.7L20.6 732.7M20.6 732.7L24.1 734.1M24.1 734.1L27.5 735.6M117.2 685.4L120.6 686.2M130.9 681.0L133.1 679.0M133.1 679.0L135.4 677.0M173.9 662.8L176.8 662.3M399.4 637.3L402.3 638.2M402.3 638.2L405.2 639.0M405.2 639.0L408.1 639.9M408.1 639.9L411.1 640.8M565.7 740.2L568.0 742.5M603.1 788.7L604.3 791.6M604.3 791.6L605.5 794.6M609.0 799.7L611.4 801.7M611.4 801.7L613.7 803.8M773.8 863.8L776.9 863.9M950.9 774.1L953.9 772.6M953.9 772.6L956.8 771.1M956.8 771.1L959.8 769.6M959.8 769.6L962.7 768.2M962.7 768.2L965.7 766.7M1102.4 588.8L1103.6 585.9M1133.3 567.2L1136.6 564.4M1149.6 538.5L1151.1 535.6M1151.1 535.6L1152.6 532.6M1180.8 407.2L1181.5 404.2M1181.5 404.2L1182.2 401.3M1414.4 183.4L1417.5 183.9" stroke="#00bfff" stroke-width="12.0" stroke-linecap="round" fill="none"/><path d="M135.4 677.0L137.7 675.0M165.0 664.6L168.0 664.0M168.0 664.0L170.9 663.4M170.9 663.4L173.9 662.8M411.1 640.8L414.0 641.7M414.0 641.7L417.0 642.9M417.0 642.9L419.9 644.1M419.9 644.1L422.9 645.3M422.9 645.3L425.8 646.4M425.8 646.4L428.8 647.6M428.8 647.6L431.7 648.8M431.7 648.8L434.7 650.0M434.7 650.0L437.3 651.5M437.3 651.5L439.9 653.1M439.9 653.1L442.5 654.6M442.5 654.6L445.0 656.2M445.0 656.2L447.6 657.8M447.6 657.8L450.2 659.3M450.2 659.3L452.8 660.9M452.8 660.9L455.4 662.4M455.4 662.4L458.8 663.8M568.0 742.5L570.3 744.7M570.3 744.7L572.7 747.0M600.8 782.7L601.9 785.7M601.9 785.7L603.1 788.7M613.7 803.8L616.0 805.8M862.5 820.0L865.1 818.0M865.1 818.0L867.6 816.0M867.6 816.0L870.2 813.9M870.2 813.9L872.8 811.9M872.8 811.9L875.3 809.9M875.3 809.9L877.9 807.8M942.1 777.9L945.0 777.0M945.0 777.0L948.0 775.5M948.0 775.5L950.9 774.1M1103.6 585.9L1104.9 583.1M1146.7 544.4L1148.2 541.5M1148.2 541.5L1149.6 538.5M1182.2 401.3L1183.0 398.3M1183.0 398.3L1183.7 395.4M1183.7 395.4L1184.5 392.4M1317.7 271.7L1320.2 269.6M1320.2 269.6L1322.6 267.5M1322.6 267.5L1324.2 264.6M1324.2 264.6L1325.9 261.7M1325.9 261.7L1327.5 258.8M1327.5 258.8L1329.2 255.9M1329.2 255.9L1330.8 253.0M1330.8 253.0L1332.4 250.1M1332.4 250.1L1334.1 247.2M1334.1 247.2L1335.7 244.4M1335.7 244.4L1337.4 241.5M1337.4 241.5L1339.0 238.6" stroke="#00bfff" stroke-width="13.0" stroke-linecap="round" fill="none"/><path d="M137.7 675.0L140.0 673.0M140.0 673.0L143.1 672.0M143.1 672.0L146.2 670.9M146.2 670.9L149.4 669.9M149.4 669.9L152.5 668.8M152.5 668.8L155.6 667.8M155.6 667.8L158.8 666.7M158.8 666.7L161.9 665.6M161.9 665.6L165.0 664.6M458.8 663.8L462.3 665.1M462.3 665.1L465.7 666.5M465.7 666.5L468.3 664.9M468.3 664.9L470.9 663.2M572.7 747.0L575.0 749.2M598.4 776.8L599.6 779.7M599.6 779.7L600.8 782.7M616.0 805.8L618.3 807.9M618.3 807.9L620.7 809.9M776.9 863.9L780.0 864.0M788.0 861.6L790.1 859.1M790.1 859.1L792.2 856.6M792.2 856.6L794.3 854.0M859.1 820.4L862.5 820.0M877.9 807.8L880.4 805.8M880.4 805.8L883.0 803.8M883.0 803.8L885.6 802.2M885.6 802.2L888.2 800.7M888.2 800.7L890.8 799.1M890.8 799.1L893.4 797.6M893.4 797.6L896.0 796.0M896.0 796.0L898.6 794.5M936.2 779.6L939.1 778.7M939.1 778.7L942.1 777.9M1104.9 583.1L1106.1 580.2M1143.8 550.1L1145.3 547.3M1145.3 547.3L1146.7 544.4M1184.5 392.4L1185.2 389.5M1256.9 347.1L1258.9 344.6M1258.9 344.6L1261.0 342.2M1261.0 342.2L1263.0 339.7M1263.0 339.7L1264.4 336.9M1264.4 336.9L1265.8 334.1M1265.8 334.1L1267.2 331.4M1267.2 331.4L1268.6 328.6M1315.3 273.8L1317.7 271.7M1339.0 238.6L1340.7 235.7M1340.7 235.7L1342.3 232.8M1342.3 232.8L1344.0 229.8M1344.0 229.8L1345.6 226.9" stroke="#00bfff" stroke-width="14.0" stroke-linecap="round" fill="none"/><path d="M575.0 749.2L577.3 751.5M596.0 770.8L597.2 773.8M597.2 773.8L598.4 776.8M620.7 809.9L623.0 812.0M784.0 862.8L788.0 861.6M794.3 854.0L796.4 851.5M796.4 851.5L798.5 849.0M798.5 849.0L800.6 846.1M800.6 846.1L802.7 843.3M855.7 820.8L859.1 820.4M898.6 794.5L901.2 792.9M901.2 792.9L903.8 791.4M903.8 791.4L906.7 790.2M906.7 790.2L909.7 789.0M909.7 789.0L912.6 787.8M912.6 787.8L915.6 786.6M915.6 786.6L918.5 785.4M918.5 785.4L921.5 784.2M921.5 784.2L924.4 783.0M924.4 783.0L927.3 782.1M927.3 782.1L930.3 781.3M930.3 781.3L933.2 780.4M933.2 780.4L936.2 779.6M1106.1 580.2L1107.3 577.4M1142.4 553.0L1143.8 550.1M1185.2 389.5L1186.0 386.5M1254.8 349.5L1256.9 347.1M1268.6 328.6L1270.0 325.8M1270.0 325.8L1271.4 323.0M1271.4 323.0L1272.4 319.9M1310.4 277.9L1312.9 275.8M1312.9 275.8L1315.3 273.8M1345.6 226.9L1347.3 224.0M1347.3 224.0L1349.4 221.1M1349.4 221.1L1351.4 218.3M1351.4 218.3L1353.5 215.4M1383.4 187.5L1386.5 185.9M1386.5 185.9L1389.6 184.4" stroke="#00bfff" stroke-width="15.0" stroke-linecap="round" fill="none"/><path d="M103.0 683.0L107.0 683.0M577.3 751.5L579.7 753.7M579.7 753.7L582.0 756.0M582.0 756.0L584.3 758.5M584.3 758.5L586.7 760.9M586.7 760.9L589.0 763.4M589.0 763.4L591.3 765.9M591.3 765.9L593.7 768.3M593.7 768.3L596.0 770.8M623.0 812.0L626.0 812.9M802.7 843.3L804.8 840.4M804.8 840.4L806.9 837.6M852.2 821.2L855.7 820.8M979.2 768.0L982.6 768.4M982.6 768.4L986.0 768.7M1136.6 564.4L1138.0 561.5M1139.5 558.7L1140.9 555.8M1140.9 555.8L1142.4 553.0M1186.0 386.5L1186.7 383.6M1252.8 352.0L1254.8 349.5M1272.4 319.9L1273.5 316.9M1308.0 280.0L1310.4 277.9M1353.5 215.4L1355.5 212.6M1355.5 212.6L1357.6 209.7M1357.6 209.7L1359.7 207.2M1359.7 207.2L1361.8 204.7M1361.8 204.7L1363.8 202.3M1363.8 202.3L1365.9 199.8M1365.9 199.8L1368.0 197.3M1368.0 197.3L1371.1 195.2M1371.1 195.2L1374.2 193.2M1374.2 193.2L1377.2 191.1M1377.2 191.1L1380.3 189.0M1380.3 189.0L1383.4 187.5M1389.6 184.4L1392.7 182.9M1392.7 182.9L1395.8 182.6M1395.8 182.6L1398.8 182.4M1398.8 182.4L1401.9 182.1M1401.9 182.1L1405.0 181.8M1405.0 181.8L1408.1 182.3M1408.1 182.3L1411.2 182.9M1411.2 182.9L1414.4 183.4" stroke="#00bfff" stroke-width="16.0" stroke-linecap="round" fill="none"/><path d="M626.0 812.9L628.9 813.7M780.0 864.0L784.0 862.8M806.9 837.6L809.0 834.7M842.0 822.4L845.4 822.0M845.4 822.0L848.8 821.6M848.8 821.6L852.2 821.2M1107.3 577.4L1108.6 574.6M1112.2 565.2L1113.4 562.0M1138.0 561.5L1139.5 558.7M1186.7 383.6L1187.5 380.6M1249.4 353.3L1252.8 352.0M1273.5 316.9L1274.5 313.9M1305.2 282.2L1308.0 280.0M1422.5 187.6L1425.0 189.5M1425.0 189.5L1427.5 191.3M1427.5 191.3L1430.0 193.2M1430.0 193.2L1432.5 195.3" stroke="#00bfff" stroke-width="17.0" stroke-linecap="round" fill="none"/><path d="M628.9 813.7L631.9 814.6M809.0 834.7L811.5 832.1M832.1 823.3L835.4 823.0M835.4 823.0L838.7 822.7M838.7 822.7L842.0 822.4M1108.6 574.6L1109.8 571.7M1111.0 568.5L1112.2 565.2M1274.5 313.9L1275.5 310.8M1302.4 284.4L1305.2 282.2M1417.5 183.9L1420.0 185.8M1420.0 185.8L1422.5 187.6M1432.5 195.3L1434.9 197.3M1434.9 197.3L1437.4 199.4M1437.4 199.4L1439.8 201.4M1439.8 201.4L1442.3 203.5M1442.3 203.5L1445.2 205.2" stroke="#00bfff" stroke-width="18.0" stroke-linecap="round" fill="none"/><path d="M631.9 814.6L634.9 815.4M811.5 832.1L814.0 829.5M825.6 823.8L828.9 823.5M828.9 823.5L832.1 823.3M1109.8 571.7L1111.0 568.5M1187.5 380.6L1188.2 377.7M1245.9 354.7L1249.4 353.3M1275.5 310.8L1277.6 308.2M1277.6 308.2L1279.7 305.6M1279.7 305.6L1281.7 303.1M1299.6 286.6L1302.4 284.4M1445.2 205.2L1448.2 206.9M1448.2 206.9L1451.2 208.7M1451.2 208.7L1454.1 210.4" stroke="#00bfff" stroke-width="19.0" stroke-linecap="round" fill="none"/><path d="M680.4 838.9L682.7 840.9M682.7 840.9L685.0 843.0M685.0 843.0L688.0 844.1M814.0 829.5L816.5 827.0M822.3 824.1L825.6 823.8M1188.2 377.7L1189.0 374.7M1281.7 303.1L1283.8 300.5M1283.8 300.5L1286.3 298.1M1286.3 298.1L1288.9 295.8M1288.9 295.8L1291.5 293.4M1291.5 293.4L1294.0 291.0M1294.0 291.0L1296.8 288.8M1296.8 288.8L1299.6 286.6M1454.1 210.4L1457.0 212.1M1457.0 212.1L1460.0 213.8" stroke="#00bfff" stroke-width="20.0" stroke-linecap="round" fill="none"/><path d="M634.9 815.4L637.9 816.3M675.8 834.7L678.1 836.8M678.1 836.8L680.4 838.9M688.0 844.1L690.9 845.3M690.9 845.3L693.9 846.4M816.5 827.0L819.0 824.4M819.0 824.4L822.3 824.1M1242.5 356.0L1245.9 354.7" stroke="#00bfff" stroke-width="21.0" stroke-linecap="round" fill="none"/><path d="M637.9 816.3L640.8 817.1M640.8 817.1L643.8 818.0M643.8 818.0L646.7 818.9M646.7 818.9L649.7 819.8M649.7 819.8L652.6 820.7M652.6 820.7L655.6 821.7M655.6 821.7L658.5 822.6M669.0 828.5L671.3 830.6M671.3 830.6L673.6 832.7M673.6 832.7L675.8 834.7M693.9 846.4L696.8 847.6M699.8 848.7L702.7 849.9M702.7 849.9L705.7 851.0M705.7 851.0L709.1 851.7M709.1 851.7L712.5 852.5M712.5 852.5L715.9 853.2M715.9 853.2L719.2 853.9M719.2 853.9L722.6 854.7M722.6 854.7L726.0 855.4M726.0 855.4L729.0 855.7M1130.0 570.0L1133.3 567.2M1189.0 374.7L1190.5 371.6" stroke="#00bfff" stroke-width="22.0" stroke-linecap="round" fill="none"/><path d="M658.5 822.6L661.5 823.5M661.5 823.5L664.4 824.4M664.4 824.4L666.7 826.5M666.7 826.5L669.0 828.5M696.8 847.6L699.8 848.7M729.0 855.7L732.0 856.0M732.0 856.0L735.0 856.3M735.0 856.3L738.0 856.5M738.0 856.5L741.0 856.8M752.9 859.2L755.8 860.1M755.8 860.1L758.8 860.9M758.8 860.9L761.7 861.8M761.7 861.8L764.7 862.7M764.7 862.7L767.6 863.6M767.6 863.6L770.7 863.7M770.7 863.7L773.8 863.8M1238.9 355.5L1242.5 356.0" stroke="#00bfff" stroke-width="23.0" stroke-linecap="round" fill="none"/><path d="M741.0 856.8L744.0 857.1M744.0 857.1L747.0 857.4M747.0 857.4L749.9 858.3M749.9 858.3L752.9 859.2M1127.5 568.0L1130.0 570.0M1190.5 371.6L1192.0 368.5" stroke="#00bfff" stroke-width="24.0" stroke-linecap="round" fill="none"/><path d="M1192.0 368.5L1193.5 365.5" stroke="#00bfff" stroke-width="25.0" stroke-linecap="round" fill="none"/><path d="M1125.0 566.0L1127.5 568.0M1235.2 355.0L1238.9 355.5" stroke="#00bfff" stroke-width="26.0" stroke-linecap="round" fill="none"/><path d="M1122.5 564.0L1125.0 566.0M1193.5 365.5L1195.0 362.4" stroke="#00bfff" stroke-width="27.0" stroke-linecap="round" fill="none"/><path d="M1113.4 562.0L1116.7 562.0M1116.7 562.0L1120.0 562.0M1120.0 562.0L1122.5 564.0M1231.6 354.5L1235.2 355.0" stroke="#00bfff" stroke-width="28.0" stroke-linecap="round" fill="none"/><path d="M1195.0 362.4L1197.8 359.6" stroke="#00bfff" stroke-width="29.0" stroke-linecap="round" fill="none"/><path d="M1197.8 359.6L1200.5 356.8M1228.0 354.0L1231.6 354.5" stroke="#00bfff" stroke-width="31.0" stroke-linecap="round" fill="none"/><path d="M1200.5 356.8L1203.3 354.0M1210.2 354.7L1213.6 355.0M1213.6 355.0L1217.2 354.8M1217.2 354.8L1220.8 354.5M1220.8 354.5L1224.4 354.2M1224.4 354.2L1228.0 354.0" stroke="#00bfff" stroke-width="32.0" stroke-linecap="round" fill="none"/><path d="M1203.3 354.0L1206.7 354.3M1206.7 354.3L1210.2 354.7" stroke="#00bfff" stroke-width="33.0" stroke-linecap="round" fill="none"/></g><polygon points="1208,359 1243,361 1243,382 1228,386 1212,384 1208,373" fill="#f4a460"/><polyline points="2.0,738.5 3.0,738.8 4.5,739.3 5.9,739.8 7.4,740.3 9.6,741.2 12.5,742.4 15.4,743.6 28.6,745.3 31.6,745.5 34.6,745.7 37.5,744.5 40.5,743.3 43.4,742.1 46.3,740.9 49.2,739.8 52.1,738.6 55.1,737.4 58.1,735.9 61.1,734.4 68.0,730.0 70.6,727.9 73.1,725.7 75.7,723.6 78.2,721.5 81.2,717.6 83.1,714.8 85.0,712.1 86.9,709.4 88.8,706.6 90.7,703.9 92.6,701.1 93.9,699.5 94.9,698.3 95.9,697.0 97.0,695.8 98.0,694.6 99.0,693.4 101.0,693.4 103.0,693.4 105.1,694.0 108.3,695.2 114.4,697.2 127.5,695.1 130.0,694.9 132.4,692.9 134.3,691.4 135.4,690.4 136.6,689.3 139.0,687.9 141.5,686.5 144.0,685.0 147.1,684.0 150.2,682.9 153.4,681.9 156.5,680.8 161.3,679.1 164.3,677.8 167.4,676.6 170.4,675.3 173.2,674.4 175.9,673.4 178.7,672.5 182.7,670.6 185.3,669.5 187.9,668.4 190.5,667.4 193.1,665.5 195.6,663.7 198.2,661.9 200.7,660.1 202.2,659.1 203.5,658.2 205.3,657.1 208.0,656.0 211.5,655.3 214.8,654.6 217.6,654.2 221.0,654.0 224.4,653.8 227.8,653.7 231.2,653.5 234.6,653.3 237.9,653.2 240.9,652.9 243.9,652.6 246.9,652.3 249.9,652.0 252.9,651.7 259.0,650.1 261.8,649.3 264.7,647.8 267.6,646.3 270.5,644.9 273.5,643.4 276.8,641.6 279.6,640.0 282.5,638.5 285.2,636.7 287.8,634.9 290.5,633.1 295.6,628.1 297.7,625.9 299.8,623.6 301.9,621.4 304.0,619.1 305.8,616.8 307.0,615.2 308.5,613.7 310.7,611.6 312.9,609.6 315.0,607.5 317.7,605.7 319.3,604.6 322.3,603.3 325.5,602.6 328.7,601.9 331.8,601.3 333.6,600.9 335.7,601.1 338.8,601.4 341.8,601.8 344.9,602.2 348.0,602.5 351.0,602.9 353.5,603.8 354.9,604.5 356.8,605.5 359.6,607.2 362.4,608.8 364.8,611.1 367.1,613.4 369.5,615.7 370.8,617.2 372.3,619.3 374.2,622.1 376.1,624.6 378.0,627.1 379.9,629.6 381.8,632.0 385.0,635.9 387.2,638.1 389.4,640.3 392.0,641.6 394.5,643.0 399.4,645.7 402.2,646.6 405.1,647.6 408.0,648.6 410.9,649.6 413.9,650.8 416.8,652.0 419.0,652.9 421.8,654.2 424.7,655.5 427.6,656.8 430.5,658.2 433.2,659.6 435.8,661.1 438.4,662.5 440.5,663.8 443.1,665.3 445.7,666.9 448.3,668.4 450.9,670.0 454.1,671.6 460.5,674.4 464.0,675.4 474.3,672.1 476.8,670.4 479.2,668.6 481.2,667.2 484.4,665.1 487.7,662.9 490.3,661.2 492.5,661.2 494.6,661.2 496.2,662.0 497.7,662.8 499.2,663.5 501.3,664.9 503.4,667.4 505.4,669.9 507.5,672.4 509.5,674.8 511.6,677.3 513.3,679.6 515.4,682.5 517.4,685.4 519.5,688.3 521.6,691.2 523.2,693.7 525.0,696.4 526.7,699.2 528.5,701.9 530.2,704.7 531.9,707.5 533.9,710.5 535.6,713.2 537.4,715.8 539.2,718.5 541.0,721.2 542.7,723.8 545.2,726.9 547.4,729.5 549.6,732.0 551.8,734.6 553.4,736.5 555.0,738.9 556.9,741.3 558.8,743.8 560.7,746.3 562.6,748.8 564.5,751.3 566.4,753.8 568.2,756.3 572.0,760.9 574.3,763.3 576.6,765.7 578.9,768.2 581.2,770.7 583.6,773.1 585.9,775.6 588.2,778.1 589.6,780.4 590.3,782.1 591.8,784.9 593.3,787.7 594.7,790.5 596.2,793.3 597.7,796.1 599.1,798.9 600.6,801.7 602.6,803.9 604.5,806.2 606.5,808.4 608.5,810.7 610.5,813.0 612.5,815.3 614.4,817.6 617.7,820.1 620.0,821.5 622.3,823.0 624.7,824.4 627.0,825.8 636.7,831.5 639.7,832.3 642.6,833.2 645.6,834.1 648.2,834.9 649.7,835.3 651.2,835.8 653.4,836.7 656.1,837.9 658.6,839.8 661.0,841.6 663.4,843.4 665.9,845.2 668.3,847.1 670.7,848.9 672.5,850.3 674.9,852.2 677.3,854.1 680.0,855.5 682.7,857.0 685.5,858.4 688.2,859.9 695.6,863.3 698.6,864.3 701.6,865.3 704.9,866.1 708.3,867.0 712.9,868.0 716.3,868.7 719.7,869.4 723.1,870.1 726.1,870.6 729.0,871.0 731.8,871.4 734.7,871.9 737.7,872.3 740.6,872.8 743.6,873.2 746.6,874.0 749.5,874.8 752.7,875.5 755.7,876.3 758.7,877.0 761.7,877.8 764.6,878.5 770.7,879.2 784.5,874.5 786.8,873.8 789.8,872.4 792.9,870.5 796.1,868.5 798.2,866.0 800.3,863.5 802.0,861.5 804.2,859.1 806.4,856.7 808.7,854.0 810.9,851.4 811.9,850.0 813.0,848.5 814.5,846.9 817.3,844.9 820.1,842.9 822.9,840.9 825.6,838.9 828.7,838.1 831.7,837.3 834.8,836.6 837.1,836.1 838.7,836.0 841.2,835.7 844.5,835.2 847.9,834.7 851.3,834.2 860.1,831.0 862.9,829.8 865.8,828.7 868.6,827.6 871.2,825.6 873.7,823.6 876.3,821.5 877.9,820.2 880.5,818.4 883.2,816.6 885.8,814.7 888.5,812.9 891.1,811.3 893.7,809.8 896.3,808.2 898.6,806.8 899.9,806.0 902.6,804.7 905.3,803.4 908.0,802.1 910.9,800.9 913.9,799.7 916.8,798.6 919.8,797.4 922.8,796.1 925.8,794.9 928.7,793.8 931.6,792.8 934.5,791.8 937.4,790.8 941.8,788.9 944.5,787.7 947.3,786.5 950.0,785.4 952.9,783.8 955.8,782.2 958.7,780.6 961.3,779.2 962.7,778.5 964.2,777.7 965.7,777.0 967.4,777.2 970.4,777.6 973.7,778.1 977.1,778.6 980.4,779.1 983.8,779.6 990.1,779.8 993.0,779.7 996.0,779.5 999.0,779.4 1002.0,779.2 1006.6,778.8 1009.5,778.4 1012.7,777.8 1015.9,777.1 1024.5,772.2 1026.7,771.1 1029.5,769.1 1032.4,767.1 1033.6,764.3 1035.1,760.8 1036.2,757.9 1037.2,755.1 1038.2,752.2 1039.2,749.3 1040.2,746.4 1041.3,743.6 1042.3,740.7 1043.3,737.8 1044.6,734.8 1045.9,732.0 1047.2,729.1 1048.6,726.1 1050.1,723.1 1051.5,720.1 1053.0,717.1 1054.4,714.1 1055.8,711.1 1057.3,708.0 1058.8,704.6 1060.2,701.5 1061.5,698.4 1062.9,695.3 1064.3,692.3 1065.6,689.2 1067.0,686.2 1068.6,682.6 1069.8,679.5 1071.0,676.5 1072.3,673.4 1073.5,670.4 1074.7,667.3 1076.0,664.3 1077.2,661.2 1078.4,658.4 1079.7,655.3 1081.0,652.3 1082.3,649.2 1083.6,646.1 1085.0,643.0 1086.3,640.0 1087.6,636.9 1088.9,634.0 1090.3,630.9 1091.6,627.8 1093.0,624.7 1094.4,621.7 1095.8,618.6 1097.1,615.5 1098.5,612.5 1099.6,610.0 1100.8,607.8 1102.4,605.0 1104.1,602.1 1105.7,599.3 1107.4,596.5 1108.5,594.4 1109.1,593.0 1109.7,591.5 1110.3,590.1 1111.0,588.7 1111.6,587.3 1112.2,585.9 1112.8,584.2 1113.4,582.6 1114.0,581.0 1115.7,581.0 1117.3,581.0 1118.5,582.0 1119.8,583.0 1140.8,578.0 1142.1,579.0 1147.1,570.5 1149.1,567.4 1150.2,564.5 1151.4,561.2 1152.4,558.2 1153.5,555.3 1154.5,552.3 1155.5,549.4 1156.6,546.5 1157.6,543.4 1158.6,540.7 1159.8,537.7 1160.9,534.7 1162.0,531.7 1163.1,528.6 1164.3,525.6 1165.2,521.9 1165.8,518.9 1166.5,515.9 1167.2,512.9 1167.8,509.9 1168.5,506.9 1169.1,503.9 1169.7,500.8 1170.4,497.4 1171.1,494.0 1171.8,490.6 1172.5,487.1 1173.3,483.7 1173.9,480.3 1174.6,476.9 1175.3,473.4 1176.0,470.0 1176.7,466.6 1177.4,463.2 1177.9,459.9 1178.4,456.9 1178.8,453.9 1179.3,450.9 1179.7,447.9 1180.2,444.9 1180.6,441.9 1181.0,439.4 1181.7,436.4 1182.3,433.3 1183.0,430.3 1183.7,427.2 1184.3,424.3 1184.8,422.2 1185.7,419.2 1186.7,416.4 1187.6,413.6 1188.6,410.7 1189.6,407.9 1190.6,405.1 1191.6,402.2 1192.5,399.5 1192.9,398.0 1193.3,396.5 1193.6,395.1 1194.0,393.6 1194.4,392.1 1194.8,390.6 1195.2,389.1 1195.9,387.6 1196.7,386.1 1197.4,384.5 1198.2,383.0 1199.9,381.6 1202.8,380.0 1205.7,378.5 1209.1,378.5 1212.5,378.5 1215.9,378.5 1219.5,378.2 1221.4,378.1 1223.2,377.9 1248.2,365.9 1252.3,361.3 1254.2,361.3 1256.1,361.2 1258.0,361.1 1260.1,359.4 1262.2,357.6 1264.3,355.8 1265.8,353.2 1267.2,350.5 1268.3,349.3 1269.6,347.6 1271.4,345.1 1273.0,342.4 1274.5,339.7 1276.0,336.9 1277.6,334.2 1279.0,331.7 1279.7,330.3 1280.8,328.2 1282.3,325.6 1283.8,323.1 1285.4,320.5 1287.6,318.1 1289.7,315.6 1291.9,313.2 1294.1,310.8 1295.9,309.2 1298.4,306.8 1301.0,304.5 1303.6,302.2 1306.4,299.9 1312.1,293.5 1314.2,290.9 1316.4,288.4 1318.6,285.9 1320.6,283.5 1322.2,281.7 1324.2,279.4 1326.3,277.0 1328.3,274.7 1330.3,272.4 1332.0,269.5 1334.0,266.2 1335.6,263.3 1337.2,260.4 1338.9,257.5 1340.5,254.7 1341.9,252.1 1343.3,250.0 1345.1,247.2 1346.9,244.5 1348.7,241.7 1350.5,238.9 1352.4,236.1 1353.8,233.7 1355.7,231.0 1357.9,228.2 1360.0,225.5 1362.2,222.7 1364.3,220.0 1366.5,217.2 1368.5,214.7 1370.6,212.2 1372.7,209.8 1374.8,207.3 1376.2,205.6 1377.8,204.5 1380.5,202.7 1383.6,200.7 1386.6,198.6 1389.6,196.9 1391.7,195.8 1393.2,195.0 1394.8,194.2 1396.3,194.1 1398.8,194.0 1401.9,193.8 1405.0,193.7 1406.6,194.0 1408.1,194.2 1409.7,194.5 1412.0,195.1 1414.6,196.7 1417.3,198.3 1419.2,199.6 1420.5,200.5 1421.8,201.5 1424.1,203.7 1426.5,205.8 1428.9,208.0 1431.2,210.1 1434.8,213.3 1437.7,215.2 1440.5,217.1 1443.3,219.0 1446.1,220.9 1450.7,223.9 1453.7,225.5" fill="none" stroke="#222" stroke-width="0.8"/><path d="M5.2 700.0V742.3M8.0 700.0V767.8M10.7 736.3V779.0M13.4 768.3V791.4M16.2 769.0V796.0M35.3 695.4V726.4M40.7 698.9V720.2M43.4 695.4V716.6M46.2 703.0V750.9M48.9 725.8V756.0M57.1 713.7V737.0M59.8 705.8V740.0M68.0 686.9V718.4M70.7 679.3V740.0M92.6 637.0V666.6M95.3 637.8V672.3M98.1 650.9V688.1M100.8 658.7V693.5M106.2 674.1V713.0M109.0 675.0V734.2M111.7 716.5V742.5M125.4 659.4V700.0M133.5 605.2V647.3M139.0 619.5V646.6M144.5 627.0V670.3M149.9 629.1V684.6M158.1 637.2V675.6M160.8 645.9V684.0M166.3 646.4V663.2M171.8 648.1V671.8M174.5 642.8V683.0M185.4 638.5V656.7M188.1 631.8V666.3M193.6 616.0V651.7M196.3 621.6V653.0M201.8 635.5V652.7M210.0 607.7V624.5M212.7 622.4V638.6M215.4 631.9V644.9M218.2 646.6V669.7M220.9 658.6V672.6M223.6 659.0V675.0M234.5 635.7V650.5M240.0 627.0V657.5M242.7 649.1V666.0M250.9 627.0V658.8M253.7 633.4V663.7M267.3 607.8V620.2M272.8 607.1V622.7M275.5 609.9V633.0M278.2 623.6V635.2M286.4 603.9V619.2M297.3 558.3V604.0M308.3 540.0V567.5M311.0 548.1V564.7M313.7 552.0V565.3M316.4 560.3V572.9M319.2 568.0V578.5M321.9 568.0V587.3M324.6 575.0V592.5M327.4 580.6V593.0M330.1 583.3V593.3M332.8 586.0V595.7M341.0 591.5V599.8M343.8 597.0V611.8M346.5 601.4V617.0M349.2 606.7V617.0M357.4 602.2V618.4M360.1 608.2V655.8M362.9 646.8V685.2M368.3 623.2V659.5M371.1 662.7V707.2M373.8 680.0V738.0M382.0 688.5V707.3M390.2 695.2V715.4M398.4 674.1V692.6M409.3 639.0V677.8M417.5 642.0V675.8M422.9 650.5V678.6M425.7 654.7V710.9M428.4 687.4V718.5M442.0 659.8V686.4M444.8 663.8V695.8M447.5 669.7V692.3M450.2 674.5V698.5M453.0 690.9V720.0M461.1 665.3V699.3M466.6 669.1V694.7M469.3 664.9V698.8M483.0 613.4V658.0M485.7 620.4V673.4M488.4 649.0V702.8M491.2 676.6V727.6M493.9 682.5V763.0M499.4 723.2V766.0M504.8 718.5V776.1M507.6 726.5V790.7M513.0 723.6V796.0M523.9 756.8V797.8M526.7 774.0V818.7M529.4 774.0V813.9M532.1 801.6V833.0M534.9 817.0V840.6M537.6 810.5V834.1M548.5 785.8V813.5M551.2 799.7V817.7M556.7 776.4V814.8M559.4 790.8V820.5M564.9 799.5V857.4M567.6 829.4V858.0M570.3 841.1V866.7M578.5 824.2V855.6M586.7 794.5V835.3M592.2 790.7V831.5M594.9 825.0V879.5M597.6 861.7V929.9M600.4 890.0V994.9M603.1 921.5V1003.0M614.0 860.9V933.9M616.8 892.8V931.8M619.5 888.4V925.6M627.7 836.1V887.4M635.9 810.0V877.0M641.3 805.8V834.7M644.1 812.6V849.2M646.8 822.9V856.6M649.5 837.2V862.0M652.2 838.8V863.6M657.7 833.8V885.2M660.4 842.2V889.0M663.2 874.5V934.3M665.9 879.0V976.5M668.6 919.0V962.2M671.4 918.1V962.7M682.3 871.5V916.5M685.0 887.5V954.0M701.4 835.5V865.5M704.1 841.4V876.7M706.8 836.0V898.0M709.6 882.4V907.2M717.8 850.1V889.5M723.2 848.8V883.1M731.4 845.8V894.8M736.9 851.1V913.1M739.6 886.3V914.5M747.8 852.2V877.0M750.5 851.0V875.8M753.3 856.1V899.7M764.2 855.6V885.4M766.9 870.0V901.4M772.4 857.7V885.7M775.1 860.6V903.5M783.3 853.9V882.7M786.0 837.3V889.1M794.2 779.4V850.7M796.9 782.4V863.3M813.3 761.5V803.7M816.0 776.4V815.2M821.5 780.4V824.0M827.0 792.9V824.0M832.4 781.1V809.0M835.2 794.4V830.8M837.9 810.3V852.0M840.6 831.2V850.9M848.8 812.0V828.8M851.5 815.1V833.1M854.3 816.9V837.2M857.0 823.6V851.0M859.7 829.7V852.1M873.4 779.0V838.6M876.1 788.9V840.1M878.8 792.3V831.3M895.2 746.0V794.8M903.4 736.8V757.0M908.9 749.0V766.7M914.3 755.2V771.0M919.8 743.1V782.6M925.2 752.0V792.3M928.0 764.8V808.0M933.4 752.4V796.4M944.4 744.6V778.0M947.1 763.7V784.9M955.3 740.9V767.8M958.0 745.0V772.2M966.2 713.6V736.9M968.9 732.8V753.1M971.7 742.2V761.4M974.4 748.0V774.9M977.1 748.0V779.1M982.6 759.9V782.3M985.3 770.0V793.5M988.0 766.7V789.7M990.8 763.1V813.0M996.2 764.4V786.2M999.0 757.8V796.0M1001.7 778.9V799.7M1007.1 760.5V794.7M1018.1 746.9V781.0M1023.5 729.9V775.7M1045.4 560.4V618.4M1048.1 585.7V615.1M1050.8 588.5V635.0M1059.0 595.2V630.0M1072.7 523.1V568.8M1075.4 543.5V579.4M1089.0 497.9V548.4M1091.8 492.8V543.0M1097.2 494.4V537.0M1108.2 453.7V511.3M1110.9 481.8V539.4M1113.6 478.5V545.2M1121.8 478.6V541.6M1124.5 515.0V659.9M1127.3 589.4V676.6M1130.0 638.5V716.3M1138.2 522.0V617.5M1140.9 549.9V605.3M1160.0 415.4V499.4M1170.9 258.4V315.0M1181.9 167.2V205.6M1187.3 172.5V211.2M1190.1 200.7V273.6M1192.8 248.8V305.5M1198.2 282.5V322.9M1206.4 292.0V356.5M1209.2 290.4V349.2M1211.9 292.0V437.6M1214.6 354.6V430.0M1225.5 346.3V374.7M1228.3 339.8V373.1M1233.7 330.0V374.5M1236.5 330.2V393.5M1239.2 354.5V390.3M1244.7 336.3V377.1M1252.8 296.0V339.8M1255.6 319.1V355.5M1269.2 151.6V246.8M1274.7 186.4V219.7M1282.9 158.1V243.8M1291.1 197.2V222.8M1293.8 198.6V224.2M1299.3 202.3V230.3M1304.7 202.0V242.6M1307.4 212.6V286.0M1310.2 245.1V284.4M1326.6 157.8V192.0M1329.3 171.1V208.0M1342.9 144.1V171.9M1351.1 132.7V164.6M1353.9 121.1V180.4M1364.8 119.0V155.0M1367.5 139.7V156.5M1370.2 141.0V158.3M1375.7 136.6V154.6M1378.4 139.0V162.6M1383.9 146.7V179.0M1394.8 136.8V158.4M1397.5 148.7V178.1M1400.3 153.7V186.5M1403.0 158.0V191.1M1408.5 161.5V197.1M1416.6 180.1V262.1M1419.4 202.4V260.1M1422.1 211.8V269.5M1430.3 192.6V221.8M1433.0 213.4V278.2M1438.5 232.0V269.8M1443.9 237.3V275.4M1449.4 225.1V246.9M1452.1 226.7V245.0M1454.9 230.7V247.5M1457.6 234.0V276.0M603.5 880.0V996.0M1127.5 600.0V732.0M766.0 880.0V946.0M1110.0 371.0V450.0M1108.5 385.0V470.0M1183.0 175.0V232.0M1346.5 110.0V160.0M483.0 613.0V660.0M377.0 700.0V745.0M430.0 690.0V727.0M812.0 735.0V790.0M958.0 698.0V750.0M1308.0 240.0V286.0M97.0 636.0V670.0M1131.0 620.0V700.0" stroke="#808000" stroke-width="1.7" fill="none"/><path d="M2.5 700.0V756.8M18.9 780.6V797.0M21.6 769.5V786.4M24.3 749.0V768.5M27.1 724.8V746.8M29.8 695.5V745.0M32.5 690.0V731.5M38.0 697.2V722.5M51.6 737.0V758.2M54.4 701.7V755.4M62.6 702.4V742.0M65.3 689.5V728.5M73.5 701.6V727.2M76.2 688.4V711.1M78.9 676.1V695.8M81.7 669.7V686.5M84.4 651.3V678.0M87.1 645.3V678.0M89.9 638.2V656.5M103.5 680.3V716.3M114.4 710.3V735.2M117.2 703.7V725.3M119.9 690.4V708.8M122.6 674.8V700.0M128.1 655.4V688.2M130.8 630.2V663.9M136.3 616.6V660.6M141.7 627.0V665.5M147.2 627.0V669.9M152.6 637.2V676.3M155.4 633.6V655.3M163.6 650.5V682.7M169.0 646.1V670.9M177.2 670.8V687.6M179.9 654.3V683.0M182.7 639.5V681.6M190.9 621.9V664.4M199.1 633.2V650.4M204.5 625.7V650.0M207.2 607.0V640.5M226.4 645.9V673.8M229.1 639.8V665.4M231.8 635.2V652.1M237.3 627.0V654.6M245.5 627.0V661.6M248.2 627.0V643.3M256.4 641.9V661.7M259.1 634.3V656.1M261.8 616.2V650.6M264.6 612.4V632.8M270.0 604.7V623.7M281.0 604.0V633.0M283.7 604.0V616.8M289.1 601.6V621.6M291.9 569.5V613.0M294.6 555.6V598.4M300.1 543.2V592.4M302.8 540.5V563.9M305.5 535.8V548.6M335.6 581.6V592.2M338.3 584.3V593.0M351.9 602.3V617.0M354.7 597.0V607.2M365.6 627.1V684.8M376.5 682.9V738.0M379.2 684.3V703.1M384.7 691.3V704.9M387.4 689.0V711.9M392.9 687.5V706.4M395.6 675.6V700.0M401.1 679.8V696.4M403.8 648.2V690.1M406.5 638.8V656.8M412.0 643.1V669.7M414.7 639.0V675.8M420.2 646.2V679.7M431.1 689.9V718.3M433.8 664.5V723.8M436.6 656.0V693.0M439.3 654.9V683.3M455.7 672.0V714.2M458.4 672.0V699.0M463.9 672.5V705.2M472.1 677.6V701.7M474.8 665.0V690.9M477.5 626.7V681.5M480.3 631.8V657.8M496.6 696.8V759.2M502.1 702.5V765.2M510.3 748.5V796.0M515.7 760.0V798.4M518.5 716.4V792.0M521.2 734.7V765.8M540.3 808.7V831.4M543.0 799.2V824.4M545.8 783.0V809.1M554.0 768.0V813.0M562.2 790.7V820.3M573.1 826.0V858.0M575.8 828.1V861.5M581.3 804.2V885.1M584.0 795.9V861.1M589.5 796.0V856.5M605.8 961.5V1005.7M608.6 869.8V968.9M611.3 861.0V922.1M622.2 869.4V906.6M624.9 816.2V903.0M630.4 818.2V882.1M633.1 810.0V884.4M638.6 810.0V865.0M655.0 833.7V872.0M674.1 897.7V960.0M676.8 890.0V941.6M679.5 878.8V913.4M687.7 887.3V954.0M690.5 876.9V925.3M693.2 840.6V916.5M695.9 834.1V873.2M698.7 838.4V884.3M712.3 873.3V898.1M715.0 845.4V898.0M720.5 838.4V880.4M726.0 854.7V891.7M728.7 847.9V872.7M734.1 859.1V885.8M742.3 858.9V910.6M745.1 855.9V906.4M756.0 879.4V909.2M758.7 863.3V913.0M761.4 855.1V883.2M769.6 858.8V886.4M777.8 853.0V909.0M780.6 853.8V876.2M788.7 842.5V878.0M791.5 787.2V869.2M799.7 813.4V848.6M802.4 802.9V835.1M805.1 777.5V813.0M807.9 756.8V813.0M810.6 777.1V809.5M818.8 766.2V815.6M824.2 788.1V824.0M829.7 794.5V830.9M843.3 825.9V853.0M846.1 816.0V836.6M862.5 823.9V848.7M865.2 797.9V847.0M867.9 779.0V840.8M870.6 779.0V814.1M881.6 792.1V816.4M884.3 781.1V803.4M887.0 759.4V796.0M889.8 746.2V766.2M892.5 745.1V765.1M897.9 751.4V789.1M900.7 739.9V771.0M906.1 745.1V770.2M911.6 758.3V772.7M917.1 749.5V765.5M922.5 747.8V774.3M930.7 773.2V808.0M936.2 760.4V792.5M938.9 765.2V793.4M941.6 729.7V783.2M949.8 739.0V776.5M952.5 735.3V771.5M960.7 710.2V766.0M963.5 704.4V743.6M979.8 755.0V799.8M993.5 765.7V801.4M1004.4 764.1V796.0M1009.9 773.8V796.7M1012.6 766.2V790.8M1015.3 747.2V782.4M1020.8 744.3V781.0M1026.3 730.2V767.6M1029.0 674.4V730.9M1031.7 628.9V697.1M1034.4 644.1V696.8M1037.2 641.2V690.8M1039.9 634.8V684.4M1042.6 557.5V667.6M1053.6 615.9V638.3M1056.3 597.6V634.7M1061.7 599.8V626.2M1064.5 574.7V604.1M1067.2 530.2V598.0M1069.9 522.0V572.7M1078.1 531.7V569.9M1080.9 504.9V552.0M1083.6 484.4V552.0M1086.3 489.3V529.7M1094.5 488.3V537.5M1100.0 507.7V537.7M1102.7 505.7V537.8M1105.4 443.1V514.0M1116.3 485.2V572.5M1119.1 488.1V533.3M1132.7 538.5V663.6M1135.5 522.0V650.0M1143.6 528.5V572.4M1146.4 498.7V541.1M1149.1 498.4V540.8M1151.8 502.2V544.6M1154.6 448.5V508.4M1157.3 397.9V478.4M1162.8 377.3V449.7M1165.5 297.2V348.4M1168.2 270.2V315.4M1173.7 249.7V308.9M1176.4 186.9V285.9M1179.1 175.5V215.4M1184.6 174.0V225.0M1195.5 263.3V305.8M1201.0 273.9V346.7M1203.7 280.5V369.9M1217.4 388.5V431.8M1220.1 360.9V409.2M1222.8 351.9V387.2M1231.0 330.0V374.7M1241.9 354.0V384.5M1247.4 304.6V375.0M1250.1 296.0V358.2M1258.3 224.7V346.2M1261.0 173.5V288.2M1263.8 139.8V203.8M1266.5 140.2V204.2M1272.0 186.6V209.0M1277.4 176.0V247.0M1280.1 174.0V244.3M1285.6 188.4V232.3M1288.3 191.1V222.1M1296.5 200.7V226.3M1302.0 195.0V226.2M1312.9 201.5V259.3M1315.6 210.7V237.1M1318.4 182.9V217.0M1321.1 157.0V217.0M1323.8 149.0V173.0M1332.0 188.5V206.2M1334.7 177.5V192.3M1337.5 168.7V191.0M1340.2 154.0V191.0M1345.7 147.5V167.2M1348.4 142.3V163.0M1356.6 149.5V189.0M1359.3 131.2V160.7M1362.0 120.4V156.3M1373.0 140.0V168.4M1381.2 139.0V169.1M1386.6 156.2V174.2M1389.3 141.9V167.4M1392.1 136.2V154.2M1405.7 157.4V193.0M1411.2 162.0V219.2M1413.9 169.7V204.2M1424.8 231.6V270.0M1427.6 194.1V267.2M1435.8 226.7V268.8M1441.2 241.5V267.9M1446.7 224.9V273.8M605.0 900.0V1003.0M1125.0 560.0V726.0M1122.5 540.0V700.0M665.0 870.0V980.0M692.0 860.0V952.0M752.0 870.0V931.0M132.0 600.0V660.0M1029.5 545.0V780.0M1031.0 550.0V700.0M300.0 542.0V600.0M17.0 760.0V796.0M110.0 690.0V740.0M203.0 607.0V640.0M1213.0 380.0V439.0M1273.0 144.0V200.0M1363.0 119.0V160.0M985.0 780.0V828.0M608.0 880.0V960.0M1157.5 300.0V465.0M1262.0 200.0V320.0" stroke="#6495ed" stroke-width="1.7" fill="none"/><polyline points="2.5,706.0 8.0,706.0 13.4,712.0 18.9,723.0 24.3,726.6 29.8,719.7 35.3,714.7 40.7,712.6 46.2,711.8 51.6,711.2 57.1,709.3 62.6,703.7 68.0,697.4 73.5,691.8 78.9,683.8 84.4,674.7 89.9,667.5 95.3,662.0 100.8,660.6 106.2,663.9 111.7,667.8 117.2,669.2 122.6,667.4 128.1,664.0 133.5,651.5 139.0,645.6 144.5,642.8 149.9,640.8 155.4,640.5 160.8,641.4 166.3,642.7 171.8,643.6 177.2,644.4 182.7,644.8 188.1,642.9 193.6,638.8 199.1,633.3 204.5,628.7 210.0,625.6 215.4,627.7 220.9,633.3 226.4,637.5 231.8,638.8 237.3,637.9 242.7,636.8 248.2,635.9 253.7,635.3 259.1,633.6 264.6,630.6 270.0,626.5 275.5,622.8 281.0,619.9 286.4,617.0 291.9,608.0 297.3,595.3 302.8,584.5 308.3,575.8 313.7,571.0 319.2,570.8 324.6,571.5 330.1,572.1 335.6,574.3 341.0,579.0 346.5,584.4 351.9,588.6 357.4,592.5 362.9,598.1 368.3,604.3 373.8,620.9 379.2,636.0 384.7,649.3 390.2,658.8 395.6,661.9 401.1,662.9 406.5,659.8 412.0,656.5 417.5,654.2 422.9,654.3 428.4,655.9 433.8,657.3 439.3,658.3 444.8,660.5 450.2,664.0 455.7,667.2 461.1,668.3 466.6,664.3 472.1,660.1 477.5,653.1 483.0,645.4 488.4,641.0 493.9,644.2 499.4,648.2 504.8,654.3 510.3,665.2 515.7,674.4 521.2,687.7 526.7,706.7 532.1,723.2 537.6,736.0 543.0,745.6 548.5,752.2 554.0,757.1 559.4,762.2 564.9,769.8 570.3,776.6 575.8,781.9 581.3,786.2 586.7,789.8 592.2,792.5 597.6,805.6 603.1,826.0 608.6,839.0 614.0,845.3 619.5,844.2 624.9,837.8 630.4,832.9 635.9,829.1 641.3,826.1 646.8,823.8 652.2,822.1 657.7,822.6 663.2,829.7 668.6,837.9 674.1,850.5 679.5,859.4 685.0,858.5 690.5,855.9 695.9,853.7 701.4,851.5 706.8,849.3 712.3,847.7 717.8,846.4 723.2,845.6 728.7,846.1 734.1,847.7 739.6,850.1 745.1,852.1 750.5,853.6 756.0,854.8 761.4,857.4 766.9,861.3 772.4,862.2 777.8,861.5 783.3,860.9 788.7,853.6 794.2,837.2 799.7,822.0 805.1,804.7 810.6,790.6 816.0,780.8 821.5,774.7 827.0,770.1 832.4,771.8 837.9,780.1 843.3,788.6 848.8,795.3 854.3,799.9 859.7,800.6 865.2,797.9 870.6,795.0 876.1,792.6 881.6,787.5 887.0,780.0 892.5,773.7 897.9,768.4 903.4,763.0 908.9,758.0 914.3,754.2 919.8,752.5 925.2,753.3 930.7,754.4 936.2,754.7 941.6,751.4 947.1,746.8 952.5,741.1 958.0,732.8 963.5,727.1 968.9,729.6 974.4,735.1 979.8,740.2 985.3,747.8 990.8,752.4 996.2,752.3 1001.7,751.8 1007.1,751.1 1012.6,747.4 1018.1,741.5 1023.5,736.7 1029.0,710.4 1034.4,674.8 1039.9,647.8 1045.4,628.3 1050.8,617.7 1056.3,610.3 1061.7,600.4 1067.2,584.9 1072.7,571.9 1078.1,552.4 1083.6,530.9 1089.0,514.5 1094.5,503.5 1100.0,495.5 1105.4,482.5 1110.9,458.7 1116.3,457.5 1121.8,465.2 1127.3,477.8 1132.7,488.4 1138.2,497.4 1143.6,491.2 1149.1,478.3 1154.6,459.6 1160.0,416.3 1165.5,374.2 1170.9,336.7 1176.4,305.5 1181.9,277.3 1187.3,256.1 1192.8,247.4 1198.2,242.8 1203.7,249.5 1209.2,260.4 1214.6,270.0 1220.1,281.9 1225.5,294.1 1231.0,303.6 1236.5,310.2 1241.9,311.8 1247.4,309.9 1252.8,308.1 1258.3,296.1 1263.8,268.2 1269.2,244.1 1274.7,223.2 1280.1,208.0 1285.6,198.7 1291.1,199.6 1296.5,201.5 1302.0,203.0 1307.4,204.1 1312.9,202.8 1318.4,195.0 1323.8,187.8 1329.3,182.1 1334.7,177.2 1340.2,173.3 1345.7,163.9 1351.1,154.2 1356.6,148.1 1362.0,143.1 1367.5,139.6 1373.0,139.4 1378.4,140.7 1383.9,141.7 1389.3,142.4 1394.8,143.6 1400.3,146.7 1405.7,151.1 1411.2,154.9 1416.6,160.8 1422.1,169.2 1427.6,176.1 1433.0,184.9 1438.5,194.9 1443.9,202.9 1449.4,209.6 1454.9,216.3" fill="none" stroke="#fff" stroke-width="1.3" stroke-dasharray="2.7 2.7"/><polyline points="2.5,776.0 8.0,776.0 13.4,777.7 18.9,781.0 24.3,779.5 29.8,770.8 35.3,764.4 40.7,760.9 46.2,758.9 51.6,757.3 57.1,755.5 62.6,752.0 68.0,748.4 73.5,744.0 78.9,733.9 84.4,720.6 89.9,710.1 95.3,701.9 100.8,700.3 106.2,706.3 111.7,713.0 117.2,715.0 122.6,710.9 128.1,706.2 133.5,695.3 139.0,692.1 144.5,691.9 149.9,691.4 155.4,690.1 160.8,688.1 166.3,686.0 171.8,684.4 177.2,683.2 182.7,682.1 188.1,679.1 193.6,674.2 199.1,668.2 204.5,663.2 210.0,659.5 215.4,659.6 220.9,662.1 226.4,664.0 231.8,664.6 237.3,664.2 242.7,663.7 248.2,663.3 253.7,663.0 259.1,661.1 264.6,657.2 270.0,651.6 275.5,646.5 281.0,642.6 286.4,639.2 291.9,633.3 297.3,625.8 302.8,615.3 308.3,604.6 313.7,597.7 319.2,595.1 324.6,593.8 330.1,592.7 335.6,593.3 341.0,596.3 346.5,600.1 351.9,603.0 357.4,607.8 362.9,622.1 368.3,637.3 373.8,657.7 379.2,674.1 384.7,684.3 390.2,691.5 395.6,693.2 401.1,693.4 406.5,691.0 412.0,688.5 417.5,687.5 422.9,691.2 428.4,698.1 433.8,703.7 439.3,708.0 444.8,710.8 450.2,712.2 455.7,713.0 461.1,712.9 466.6,709.7 472.1,706.6 477.5,701.1 483.0,695.0 488.4,693.2 493.9,705.0 499.4,717.2 504.8,728.9 510.3,742.6 515.7,753.7 521.2,765.4 526.7,778.9 532.1,790.2 537.6,798.9 543.0,804.4 548.5,806.1 554.0,806.7 559.4,809.5 564.9,817.9 570.3,826.0 575.8,832.8 581.3,842.4 586.7,853.9 592.2,863.0 597.6,882.2 603.1,908.5 608.6,924.2 614.0,930.0 619.5,928.5 624.9,921.8 630.4,916.7 635.9,912.1 641.3,905.3 646.8,897.1 652.2,890.6 657.7,890.4 663.2,907.2 668.6,922.3 674.1,930.2 679.5,935.8 685.0,939.3 690.5,941.7 695.9,941.1 701.4,935.0 706.8,925.9 712.3,918.7 717.8,913.2 723.2,909.0 728.7,907.0 734.1,906.6 739.6,907.4 745.1,908.2 750.5,908.8 756.0,909.3 761.4,912.7 766.9,918.9 772.4,919.1 777.8,915.9 783.3,913.5 788.7,907.8 794.2,897.6 799.7,887.0 805.1,870.6 810.6,856.7 816.0,847.1 821.5,840.9 827.0,836.2 832.4,835.0 837.9,837.2 843.3,839.8 848.8,841.9 854.3,843.4 859.7,844.1 865.2,844.0 870.6,843.7 876.1,843.4 881.6,838.1 887.0,828.5 892.5,820.2 897.9,813.0 903.4,804.3 908.9,795.9 914.3,789.4 919.8,787.3 925.2,790.1 930.7,793.2 936.2,795.1 941.6,792.6 947.1,788.4 952.5,784.2 958.0,779.2 963.5,775.8 968.9,777.3 974.4,780.6 979.8,784.4 985.3,792.7 990.8,797.6 996.2,796.9 1001.7,795.8 1007.1,794.8 1012.6,792.4 1018.1,789.1 1023.5,786.4 1029.0,773.5 1034.4,753.2 1039.9,734.2 1045.4,717.7 1050.8,699.2 1056.3,683.8 1061.7,669.1 1067.2,652.7 1072.7,639.4 1078.1,622.9 1083.6,606.0 1089.0,592.5 1094.5,579.8 1100.0,569.2 1105.4,559.4 1110.9,548.5 1116.3,552.2 1121.8,567.1 1127.3,603.6 1132.7,621.3 1138.2,626.9 1143.6,615.0 1149.1,595.8 1154.6,577.5 1160.0,551.8 1165.5,511.4 1170.9,466.2 1176.4,427.6 1181.9,391.4 1187.3,363.9 1192.8,351.2 1198.2,343.7 1203.7,354.8 1209.2,372.9 1214.6,385.9 1220.1,391.3 1225.5,392.6 1231.0,393.6 1236.5,393.9 1241.9,391.4 1247.4,387.0 1252.8,383.4 1258.3,376.3 1263.8,363.2 1269.2,345.0 1274.7,313.8 1280.1,297.8 1285.6,286.3 1291.1,280.4 1296.5,276.3 1302.0,275.3 1307.4,276.8 1312.9,274.6 1318.4,262.6 1323.8,251.4 1329.3,241.6 1334.7,230.1 1340.2,220.4 1345.7,208.4 1351.1,199.4 1356.6,196.2 1362.0,190.5 1367.5,183.5 1373.0,181.0 1378.4,180.8 1383.9,180.6 1389.3,180.5 1394.8,182.0 1400.3,189.7 1405.7,201.6 1411.2,211.9 1416.6,221.6 1422.1,231.5 1427.6,239.4 1433.0,247.7 1438.5,256.3 1443.9,263.0 1449.4,267.2 1454.9,268.5" fill="none" stroke="#fff" stroke-width="1.3" stroke-dasharray="2.7 2.7"/><polyline points="2.5,710.6 8.0,712.9 13.4,720.5 18.9,728.1 24.3,732.5 29.8,731.4 35.3,729.1 40.7,726.5 46.2,725.6 51.6,728.1 57.1,727.8 62.6,727.0 68.0,724.1 73.5,723.3 78.9,720.5 84.4,714.6 89.9,706.8 95.3,700.5 100.8,698.2 106.2,696.7 111.7,700.8 117.2,703.4 122.6,701.5 128.1,698.7 133.5,691.7 139.0,685.3 144.5,679.7 149.9,675.7 155.4,672.1 160.8,671.2 166.3,670.1 171.8,668.8 177.2,670.1 182.7,668.5 188.1,666.8 193.6,662.8 199.1,660.7 204.5,658.1 210.0,653.6 215.4,651.1 220.9,652.4 226.4,653.7 231.8,652.2 237.3,650.7 242.7,651.2 248.2,649.0 253.7,649.5 259.1,649.0 264.6,645.3 270.0,641.5 275.5,639.1 281.0,636.8 286.4,633.6 291.9,629.4 297.3,622.9 302.8,614.4 308.3,606.8 313.7,601.2 319.2,597.1 324.6,595.3 330.1,594.5 335.6,594.0 341.0,593.8 346.5,595.6 351.9,597.2 357.4,597.8 362.9,604.3 368.3,609.7 373.8,621.7 379.2,630.2 384.7,638.1 390.2,645.1 395.6,650.2 401.1,654.6 406.5,654.4 412.0,654.9 417.5,654.4 422.9,654.6 428.4,660.0 433.8,662.6 439.3,662.4 444.8,663.3 450.2,666.4 455.7,669.5 461.1,670.8 466.6,671.6 472.1,674.5 477.5,672.8 483.0,669.1 488.4,669.6 493.9,675.8 499.4,683.7 504.8,690.3 510.3,699.5 515.7,708.7 521.2,712.7 526.7,721.1 532.1,732.6 537.6,744.0 543.0,752.4 548.5,758.6 554.0,763.3 559.4,768.6 564.9,775.3 570.3,784.3 575.8,791.1 581.3,797.4 586.7,798.8 592.2,799.6 597.6,809.3 603.1,829.5 608.6,842.5 614.0,846.8 619.5,854.1 624.9,856.5 630.4,857.0 635.9,853.5 641.3,849.1 646.8,848.0 652.2,848.7 657.7,849.7 663.2,856.1 668.6,866.2 674.1,874.0 679.5,875.7 685.0,882.3 690.5,883.0 695.9,879.6 701.4,875.5 706.8,875.4 712.3,877.2 717.8,876.9 723.2,875.7 728.7,873.5 734.1,872.9 739.6,875.6 745.1,874.6 750.5,873.1 756.0,874.7 761.4,874.1 766.9,873.8 772.4,874.1 777.8,874.8 783.3,873.6 788.7,871.4 794.2,864.1 799.7,861.0 805.1,855.4 810.6,847.5 816.0,842.2 821.5,838.3 827.0,834.8 832.4,831.2 837.9,831.8 843.3,832.6 848.8,830.8 854.3,830.0 859.7,831.7 865.2,832.2 870.6,827.5 876.1,825.7 881.6,824.0 887.0,817.9 892.5,810.8 897.9,805.6 903.4,799.0 908.9,794.2 914.3,790.5 919.8,786.7 925.2,784.2 930.7,784.0 936.2,784.3 941.6,781.2 947.1,780.6 952.5,777.6 958.0,775.8 963.5,770.0 968.9,765.9 974.4,764.4 979.8,764.9 985.3,765.8 990.8,768.0 996.2,768.5 1001.7,771.5 1007.1,773.2 1012.6,774.4 1018.1,774.3 1023.5,772.0 1029.0,767.1 1034.4,756.9 1039.9,745.4 1045.4,726.5 1050.8,713.9 1056.3,703.4 1061.7,693.5 1067.2,679.3 1072.7,663.1 1078.1,651.7 1083.6,637.5 1089.0,623.5 1094.5,612.3 1100.0,601.7 1105.4,588.7 1110.9,579.5 1116.3,573.7 1121.8,564.9 1127.3,573.9 1132.7,582.1 1138.2,579.2 1143.6,578.2 1149.1,572.4 1154.6,563.2 1160.0,550.7 1165.5,529.4 1170.9,500.6 1176.4,468.2 1181.9,435.4 1187.3,405.5 1192.8,390.5 1198.2,380.7 1203.7,370.8 1209.2,362.6 1214.6,367.4 1220.1,370.3 1225.5,369.1 1231.0,367.1 1236.5,366.0 1241.9,366.4 1247.4,364.4 1252.8,359.5 1258.3,353.0 1263.8,332.6 1269.2,315.5 1274.7,302.9 1280.1,291.6 1285.6,283.6 1291.1,274.5 1296.5,267.5 1302.0,260.8 1307.4,258.6 1312.9,257.0 1318.4,250.7 1323.8,240.5 1329.3,235.4 1334.7,230.3 1340.2,223.5 1345.7,216.5 1351.1,208.2 1356.6,203.0 1362.0,194.8 1367.5,189.1 1373.0,184.8 1378.4,181.2 1383.9,178.8 1389.3,176.1 1394.8,172.4 1400.3,170.5 1405.7,169.9 1411.2,172.2 1416.6,176.4 1422.1,184.9 1427.6,189.1 1433.0,194.0 1438.5,200.0 1443.9,205.6 1449.4,208.9 1454.9,212.3" fill="none" stroke="#9a9a9a" stroke-width="1" stroke-dasharray="3 3"/><rect x="2" y="1031.1" width="975" height="1.1" fill="#fff"/><rect x="944.8" y="1032" width="1.3" height="3.6" fill="#fff"/><rect x="856.5" y="1032" width="1.3" height="3.6" fill="#fff"/><rect x="768.2" y="1032" width="1.3" height="3.6" fill="#fff"/><rect x="679.9" y="1032" width="1.3" height="3.6" fill="#fff"/><rect x="591.6" y="1032" width="1.3" height="3.6" fill="#fff"/><rect x="503.3" y="1032" width="1.3" height="3.6" fill="#fff"/><rect x="415.0" y="1032" width="1.3" height="3.6" fill="#fff"/><rect x="326.7" y="1032" width="1.3" height="3.6" fill="#fff"/><rect x="238.4" y="1032" width="1.3" height="3.6" fill="#fff"/><rect x="150.1" y="1032" width="1.3" height="3.6" fill="#fff"/><rect x="61.8" y="1032" width="1.3" height="3.6" fill="#fff"/></svg><div style="position:absolute;left:0;top:0;width:1460px;height:1066px;z-index:0;"><span style="position:absolute;left:477px;top:634.4px;font-size:17.3px;line-height:21.3px;color:#fff;letter-spacing:0px;white-space:nowrap;">Frankfurt</span><span style="position:absolute;left:565px;top:811.4px;font-size:17.3px;line-height:21.3px;color:#fff;letter-spacing:0px;white-space:nowrap;">London</span><span style="position:absolute;left:1061px;top:477.4px;font-size:17.3px;line-height:21.3px;color:#fff;letter-spacing:0.47px;white-space:nowrap;">US Equity Market</span><span style="position:absolute;left:1202px;top:402.4px;font-size:17.3px;line-height:21.3px;color:#fff;letter-spacing:0.122px;white-space:nowrap;">London Close</span><span style="position:absolute;left:967px;top:836.4px;font-size:17.3px;line-height:21.3px;color:#fff;letter-spacing:0px;white-space:nowrap;">M</span><span style="position:absolute;left:2px;top:999.2px;font-size:13.5px;line-height:17.5px;color:#dcdc00;letter-spacing:-0.383px;white-space:nowrap;">ns.In/Forex</span><span style="position:absolute;left:60.0px;top:1035.0px;font-size:13px;line-height:17px;color:#fff;letter-spacing:-0.199px;white-space:nowrap;">25 Jun 03:50</span><span style="position:absolute;left:148.3px;top:1035.0px;font-size:13px;line-height:17px;color:#fff;letter-spacing:-0.199px;white-space:nowrap;">25 Jun 04:54</span><span style="position:absolute;left:236.6px;top:1035.0px;font-size:13px;line-height:17px;color:#fff;letter-spacing:-0.199px;white-space:nowrap;">25 Jun 05:58</span><span style="position:absolute;left:324.9px;top:1035.0px;font-size:13px;line-height:17px;color:#fff;letter-spacing:-0.199px;white-space:nowrap;">25 Jun 07:02</span><span style="position:absolute;left:413.2px;top:1035.0px;font-size:13px;line-height:17px;color:#fff;letter-spacing:-0.199px;white-space:nowrap;">25 Jun 08:06</span><span style="position:absolute;left:501.5px;top:1035.0px;font-size:13px;line-height:17px;color:#fff;letter-spacing:-0.199px;white-space:nowrap;">25 Jun 09:10</span><span style="position:absolute;left:589.8px;top:1035.0px;font-size:13px;line-height:17px;color:#fff;letter-spacing:-0.199px;white-space:nowrap;">25 Jun 10:14</span><span style="position:absolute;left:678.1px;top:1035.0px;font-size:13px;line-height:17px;color:#fff;letter-spacing:-0.111px;white-space:nowrap;">25 Jun 11:18</span><span style="position:absolute;left:766.4px;top:1035.0px;font-size:13px;line-height:17px;color:#fff;letter-spacing:-0.199px;white-space:nowrap;">25 Jun 12:22</span><span style="position:absolute;left:854.7px;top:1035.0px;font-size:13px;line-height:17px;color:#fff;letter-spacing:-0.199px;white-space:nowrap;">25 Jun 13:26</span><span style="position:absolute;left:943.0px;top:1035.0px;font-size:13px;line-height:17px;color:#fff;letter-spacing:-0.199px;white-space:nowrap;">25 Jun 14:30</span><span style="position:absolute;right:1415px;top:1035.0px;font-size:13px;line-height:17px;color:#fff;letter-spacing:-0.199px;white-space:nowrap;">25 Jun 02:46</span></div><div style="position:absolute;left:0;top:0;width:1460px;height:1066px;z-index:3;overflow:hidden;pointer-events:none;"><div style="position:absolute;left:2px;top:0;width:1458px;height:1066px;overflow:hidden;"><div style="position:absolute;left:-2px;top:0;width:1460px;height:1066px;"><div style="position:absolute;left:2px;top:53px;width:728.6px;height:415px;background:#f0f0f0;border-right:1.6px solid #333;border-bottom:1.2px solid #333;border-top:1px solid #333;"></div><div style="position:absolute;left:2px;top:54px;width:727px;height:41px;background:#fff;"></div><span style="position:absolute;right:1219px;top:64.5px;font-size:15px;line-height:19px;color:#9b9b9b;letter-spacing:0.528px;white-space:nowrap;">Custom Indicator - !!Vidya filled zone + bands</span><span style="position:absolute;left:630.5px;top:63.0px;font-size:17px;line-height:21px;color:#707070;letter-spacing:0px;white-space:nowrap;">?</span><svg width="14" height="14" viewBox="0 0 14 14" style="left:690px;top:66px"><path d="M1 1L13 13M13 1L1 13" stroke="#5a5a5a" stroke-width="1.1" fill="none"/></svg><div style="position:absolute;left:2px;top:132.5px;width:719px;height:286px;background:#fff;border:1px solid #d4d4d4;border-left:none;"></div><div style="position:absolute;left:-20px;top:108px;width:38px;height:26px;background:#f0f0f0;border:1px solid #d9d9d9;"></div><div style="position:absolute;left:17px;top:108px;width:65px;height:26px;background:#f0f0f0;border:1px solid #d9d9d9;"></div><div style="position:absolute;left:245px;top:108px;width:58px;height:26px;background:#f0f0f0;border:1px solid #d9d9d9;"></div><div style="position:absolute;left:302px;top:108px;width:110px;height:26px;background:#f0f0f0;border:1px solid #d9d9d9;"></div><div style="position:absolute;left:81px;top:105px;width:165px;height:30px;background:#fff;border:1px solid #d9d9d9;border-bottom:none;"></div><span style="position:absolute;right:1448px;top:111.0px;font-size:15px;line-height:19px;color:#000;letter-spacing:-0.037px;white-space:nowrap;">О программе</span><span style="position:absolute;left:26px;top:111.0px;font-size:15px;line-height:19px;color:#000;letter-spacing:-0.332px;white-space:nowrap;">Общие</span><span style="position:absolute;left:91px;top:109.5px;font-size:15px;line-height:19px;color:#000;letter-spacing:0.012px;white-space:nowrap;">Входные параметры</span><span style="position:absolute;left:252px;top:111.0px;font-size:15px;line-height:19px;color:#000;letter-spacing:-0.199px;white-space:nowrap;">Цвета</span><span style="position:absolute;left:310px;top:111.0px;font-size:15px;line-height:19px;color:#000;letter-spacing:-0.037px;white-space:nowrap;">Отображение</span><div style="position:absolute;left:2px;top:146px;width:551px;height:259px;background:#fff;border:1px solid #828790;border-left:none;"></div><div style="position:absolute;left:224px;top:181.5px;width:1px;height:27.0px;background:#e4e4e4;"></div><span style="position:absolute;right:1436px;top:185.5px;font-size:15px;line-height:19px;color:#000;letter-spacing:-0.473px;white-space:nowrap;">Time frame</span><span style="position:absolute;left:229px;top:185.5px;font-size:15px;line-height:19px;color:#000;letter-spacing:-0.473px;white-space:nowrap;">Current time frame</span><div style="position:absolute;left:2px;top:208.5px;width:524px;height:27.69999999999999px;background:#ebebeb;border-top:1px solid #c4c4c4;border-bottom:1px solid #c4c4c4;"></div><div style="position:absolute;left:224px;top:208.5px;width:1px;height:27.69999999999999px;background:#d0d0d0;"></div><span style="position:absolute;right:1243px;top:212.8px;font-size:15px;line-height:19px;color:#000;letter-spacing:-0.256px;white-space:nowrap;">Custom time frame to use (if custom tim...</span><span style="position:absolute;left:230px;top:212.8px;font-size:15px;line-height:19px;color:#000;letter-spacing:-0.473px;white-space:nowrap;">0</span><div style="position:absolute;left:224px;top:236.2px;width:1px;height:27.600000000000023px;background:#e4e4e4;"></div><span style="position:absolute;right:1430px;top:240.5px;font-size:15px;line-height:19px;color:#000;letter-spacing:-0.473px;white-space:nowrap;">CMO period</span><span style="position:absolute;left:230px;top:240.5px;font-size:15px;line-height:19px;color:#000;letter-spacing:-0.458px;white-space:nowrap;">1440</span><div style="position:absolute;left:2px;top:263.8px;width:524px;height:27.599999999999966px;background:#ebebeb;border-top:1px solid #c4c4c4;border-bottom:1px solid #c4c4c4;"></div><div style="position:absolute;left:224px;top:263.8px;width:1px;height:27.599999999999966px;background:#d0d0d0;"></div><span style="position:absolute;right:1395px;top:268.1px;font-size:15px;line-height:19px;color:#000;letter-spacing:-0.473px;white-space:nowrap;">Smoothing period</span><span style="position:absolute;left:230px;top:268.1px;font-size:15px;line-height:19px;color:#000;letter-spacing:-0.473px;white-space:nowrap;">5</span><div style="position:absolute;left:224px;top:291.4px;width:1px;height:27.80000000000001px;background:#e4e4e4;"></div><span style="position:absolute;right:1403px;top:295.8px;font-size:15px;line-height:19px;color:#000;letter-spacing:-0.473px;white-space:nowrap;">Show high line?</span><span style="position:absolute;left:228px;top:295.8px;font-size:15px;line-height:19px;color:#000;letter-spacing:-0.286px;white-space:nowrap;">true</span><div style="position:absolute;left:2px;top:319.2px;width:524px;height:27.600000000000023px;background:#ebebeb;border-top:1px solid #c4c4c4;border-bottom:1px solid #c4c4c4;"></div><div style="position:absolute;left:224px;top:319.2px;width:1px;height:27.600000000000023px;background:#d0d0d0;"></div><span style="position:absolute;right:1389px;top:323.5px;font-size:15px;line-height:19px;color:#000;letter-spacing:-0.473px;white-space:nowrap;">Show middle line?</span><span style="position:absolute;left:228px;top:323.5px;font-size:15px;line-height:19px;color:#000;letter-spacing:-0.286px;white-space:nowrap;">true</span><div style="position:absolute;left:224px;top:346.8px;width:1px;height:27.80000000000001px;background:#e4e4e4;"></div><span style="position:absolute;right:1409px;top:351.2px;font-size:15px;line-height:19px;color:#000;letter-spacing:-0.473px;white-space:nowrap;">Show low line?</span><span style="position:absolute;left:228px;top:351.2px;font-size:15px;line-height:19px;color:#000;letter-spacing:-0.286px;white-space:nowrap;">true</span><div style="position:absolute;left:2px;top:374.6px;width:524px;height:27.599999999999966px;background:#ebebeb;border-top:1px solid #c4c4c4;border-bottom:1px solid #c4c4c4;"></div><div style="position:absolute;left:224px;top:374.6px;width:1px;height:27.599999999999966px;background:#d0d0d0;"></div><span style="position:absolute;right:1453px;top:378.9px;font-size:15px;line-height:19px;color:#000;letter-spacing:-0.473px;white-space:nowrap;">Line width</span><span style="position:absolute;left:230px;top:378.9px;font-size:15px;line-height:19px;color:#000;letter-spacing:-0.473px;white-space:nowrap;">4</span><div style="position:absolute;left:224px;top:148px;width:1px;height:33px;background:#e4e4e4;"></div><span style="position:absolute;right:1439px;top:155.5px;font-size:15px;line-height:19px;color:#000;letter-spacing:-0.219px;white-space:nowrap;">Переменная</span><span style="position:absolute;left:234px;top:155.5px;font-size:15px;line-height:19px;color:#000;letter-spacing:-0.219px;white-space:nowrap;">Значение</span><div style="position:absolute;left:526px;top:147px;width:26px;height:257px;background:#f0f0f0;"></div><div style="position:absolute;left:529.5px;top:172px;width:18px;height:127px;background:#cdcdcd;"></div><svg width="12" height="8" viewBox="0 0 12 8" style="left:532px;top:157px"><path d="M1.5 6.5L6 2L10.5 6.5" stroke="#505050" stroke-width="1.8" fill="none"/></svg><svg width="12" height="8" viewBox="0 0 12 8" style="left:532px;top:387px"><path d="M1.5 1.5L6 6L10.5 1.5" stroke="#505050" stroke-width="1.8" fill="none"/></svg><div style="position:absolute;left:564px;top:328.5px;width:142px;height:28.0px;background:#e1e1e1;border:1px solid #adadad;"></div><span style="position:absolute;left:600.0px;top:333.0px;font-size:15px;line-height:19px;color:#000;letter-spacing:0.188px;white-space:nowrap;">Загрузить</span><div style="position:absolute;left:564px;top:374px;width:142px;height:28px;background:#e1e1e1;border:1px solid #adadad;"></div><span style="position:absolute;left:599.0px;top:378.5px;font-size:15px;line-height:19px;color:#000;letter-spacing:-0.318px;white-space:nowrap;">Сохранить</span><div style="position:absolute;left:392px;top:426.5px;width:101px;height:28.5px;background:#e1e1e1;border:1px solid #adadad;"></div><span style="position:absolute;left:431.5px;top:431.2px;font-size:15px;line-height:19px;color:#000;letter-spacing:0.312px;white-space:nowrap;">OK</span><div style="position:absolute;left:504px;top:426.5px;width:101px;height:28.5px;background:#e1e1e1;border:1px solid #adadad;"></div><span style="position:absolute;left:527.5px;top:431.2px;font-size:15px;line-height:19px;color:#000;letter-spacing:0.034px;white-space:nowrap;">Отмена</span><div style="position:absolute;left:616px;top:426.5px;width:101px;height:28.5px;background:#e1e1e1;border:1px solid #adadad;"></div><span style="position:absolute;left:644.5px;top:431.2px;font-size:15px;line-height:19px;color:#000;letter-spacing:0.098px;white-space:nowrap;">Сброс</span><svg width="12" height="12" viewBox="0 0 12 12" style="left:716px;top:454px"><g fill="#b0b0b0"><rect x="9" y="1" width="2" height="2"/><rect x="5" y="5" width="2" height="2"/><rect x="9" y="5" width="2" height="2"/><rect x="1" y="9" width="2" height="2"/><rect x="5" y="9" width="2" height="2"/><rect x="9" y="9" width="2" height="2"/></g></svg></div></div></div><div style="position:absolute;left:0;top:0;width:1460px;height:1066px;z-index:4;overflow:hidden;"><div style="position:absolute;left:975px;top:824.5px;width:485px;height:241.5px;background:#f0f0f0;"></div><div style="position:absolute;left:975px;top:824.5px;width:485px;height:31px;background:#fff;"></div><div style="position:absolute;left:975px;top:824.5px;width:1px;height:241.5px;background:#c8c8c8;"></div><svg width="17" height="14" viewBox="0 0 17 14" style="left:983px;top:832px"><rect x="1.5" y="1.5" width="14" height="11" fill="#dfeaf5" stroke="#4c6f9c" stroke-width="1"/><rect x="3.5" y="3.5" width="10" height="7" fill="#5b9bd5"/><path d="M3.5 10.5L7 6.5L9.5 9L11 7.5L13.5 10.5Z" fill="#4e8a3c"/><rect x="0" y="0" width="3" height="3" fill="#3f6ea5"/><rect x="14" y="0" width="3" height="3" fill="#3f6ea5"/><rect x="0" y="11" width="3" height="3" fill="#3f6ea5"/><rect x="14" y="11" width="3" height="3" fill="#3f6ea5"/></svg><span style="position:absolute;left:1004.5px;top:831.0px;font-size:13px;line-height:17px;color:#8a8a8a;letter-spacing:-0.661px;white-space:nowrap;">Screenshot_30 - Средство просмотра фотографий Windo...</span><div style="position:absolute;left:1347px;top:839px;width:11px;height:1px;background:#666;"></div><div style="position:absolute;left:1393px;top:834px;width:11px;height:11px;border:1px solid #777;"></div><svg width="12" height="12" viewBox="0 0 12 12" style="left:1438px;top:833px"><path d="M0.5 0.5L11.5 11.5M11.5 0.5L0.5 11.5" stroke="#555" stroke-width="1.1" fill="none"/></svg><div style="position:absolute;left:976px;top:855px;width:484px;height:29px;background:linear-gradient(#f5f8fd 0%,#e8eff8 43%,#dae5f2 47%,#dbe6f3 100%);border-bottom:1px solid #a9b6c9;border-top:1px solid #b3bfd1;"></div><span style="position:absolute;left:988.7px;top:861.7px;font-size:12px;line-height:16px;color:#1e395b;letter-spacing:-0.739px;white-space:nowrap;">Файл</span><span style="position:absolute;left:1049.5px;top:861.7px;font-size:12px;line-height:16px;color:#1e395b;letter-spacing:-0.263px;white-space:nowrap;">Печать</span><span style="position:absolute;left:1118.7px;top:861.7px;font-size:12px;line-height:16px;color:#1e395b;letter-spacing:-0.262px;white-space:nowrap;">Эл. почта</span><span style="position:absolute;left:1190px;top:861.7px;font-size:12px;line-height:16px;color:#1e395b;letter-spacing:-0.275px;white-space:nowrap;">Запись</span><span style="position:absolute;left:1260px;top:861.7px;font-size:12px;line-height:16px;color:#1e395b;letter-spacing:-0.09px;white-space:nowrap;">Открыть</span><div style="position:absolute;left:1026.7px;top:866.5px;width:0;height:0;border-left:4px solid transparent;border-right:4px solid transparent;border-top:4.5px solid #1e2f4d;"></div><div style="position:absolute;left:1097px;top:866.5px;width:0;height:0;border-left:4px solid transparent;border-right:4px solid transparent;border-top:4.5px solid #1e2f4d;"></div><div style="position:absolute;left:1237px;top:866.5px;width:0;height:0;border-left:4px solid transparent;border-right:4px solid transparent;border-top:4.5px solid #1e2f4d;"></div><div style="position:absolute;left:1315px;top:866.5px;width:0;height:0;border-left:4px solid transparent;border-right:4px solid transparent;border-top:4.5px solid #1e2f4d;"></div><div style="position:absolute;left:1441.5px;top:860.5px;width:15.0px;height:15.0px;border-radius:50%;background:radial-gradient(circle at 50% 30%,#6f9be0 0%,#2a5cc0 55%,#153d95 100%);border:1px solid #1b3f8f;box-shadow:0 0 0 1px #c4ccd8;color:#fff;font-weight:bold;font-size:12px;line-height:13.0px;text-align:center;">?</div><div style="position:absolute;left:976px;top:884px;width:484px;height:24px;background:#fff;"></div><span style="position:absolute;left:980px;top:888.0px;font-size:10px;line-height:14px;color:#9b9b9b;letter-spacing:-0.118px;white-space:nowrap;">Custom Indicator - !!Vidya filled zone + bands</span><span style="position:absolute;left:1409.5px;top:888.0px;font-size:10px;line-height:14px;color:#777;letter-spacing:0px;white-space:nowrap;">?</span><svg width="9" height="9" viewBox="0 0 9 9" style="left:1445px;top:890px"><path d="M0.5 0.5L8.5 8.5M8.5 0.5L0.5 8.5" stroke="#666" stroke-width="1" fill="none"/></svg><div style="position:absolute;left:976px;top:929px;width:484px;height:137px;background:#fff;border-top:1px solid #dcdcdc;"></div><div style="position:absolute;left:979px;top:914.5px;width:65.5px;height:15.5px;background:#f0f0f0;border:1px solid #d9d9d9;"></div><div style="position:absolute;left:1044px;top:914.5px;width:38.5px;height:15.5px;background:#f0f0f0;border:1px solid #d9d9d9;"></div><div style="position:absolute;left:1180px;top:914.5px;width:33.5px;height:15.5px;background:#f0f0f0;border:1px solid #d9d9d9;"></div><div style="position:absolute;left:1213px;top:914.5px;width:66px;height:15.5px;background:#f0f0f0;border:1px solid #d9d9d9;"></div><div style="position:absolute;left:1082px;top:912.5px;width:98.5px;height:18.5px;background:#fff;border:1px solid #d9d9d9;border-bottom:none;"></div><span style="position:absolute;left:983.5px;top:915.5px;font-size:10px;line-height:14px;color:#000;letter-spacing:-0.519px;white-space:nowrap;">О программе</span><span style="position:absolute;left:1049.5px;top:915.5px;font-size:10px;line-height:14px;color:#000;letter-spacing:-1.223px;white-space:nowrap;">Общие</span><span style="position:absolute;left:1088.5px;top:914.0px;font-size:10px;line-height:14px;color:#000;letter-spacing:-0.639px;white-space:nowrap;">Входные параметры</span><span style="position:absolute;left:1184.5px;top:915.5px;font-size:10px;line-height:14px;color:#000;letter-spacing:-0.965px;white-space:nowrap;">Цвета</span><span style="position:absolute;left:1218.5px;top:915.5px;font-size:10px;line-height:14px;color:#000;letter-spacing:-0.759px;white-space:nowrap;">Отображение</span><div style="position:absolute;left:987px;top:937.5px;width:376px;height:140px;background:#fff;border:1px solid #9da2ab;"></div><span style="position:absolute;left:994px;top:941.6px;font-size:10px;line-height:14px;color:#000;letter-spacing:-0.705px;white-space:nowrap;">Переменная</span><span style="position:absolute;left:1173px;top:941.6px;font-size:10px;line-height:14px;color:#000;letter-spacing:-0.908px;white-space:nowrap;">Значение</span><div style="position:absolute;left:1167px;top:958.3px;width:1px;height:16.5px;background:#e4e4e4;"></div><svg width="13" height="13" viewBox="0 0 13 13" style="left:990px;top:960.0px"><path d="M0.5 1.8Q0.5 0.5 1.8 0.5H9.6L12.5 3.2V12.3L10.8 11.2L9.3 12.4H3.9L2.4 11.2L0.5 12.4Z" fill="#8dbbeb" stroke="#4f89c9" stroke-width="0.9"/><text x="6.4" y="8.9" font-size="6.2" font-weight="bold" text-anchor="middle" fill="#1d3557" font-family="Liberation Sans, sans-serif" letter-spacing="-0.4">123</text></svg><span style="position:absolute;left:1007px;top:959.8px;font-size:9.5px;line-height:13.5px;color:#000;letter-spacing:-0.54px;white-space:nowrap;">Time frame</span><span style="position:absolute;left:1170px;top:959.8px;font-size:9.5px;line-height:13.5px;color:#000;letter-spacing:-0.54px;white-space:nowrap;">Current time frame</span><div style="position:absolute;left:988px;top:974.8px;width:359px;height:16.40000000000009px;background:#ebebeb;border-top:1px solid #c8c8c8;border-bottom:1px solid #c8c8c8;"></div><div style="position:absolute;left:1167px;top:974.8px;width:1px;height:16.40000000000009px;background:#d0d0d0;"></div><svg width="13" height="13" viewBox="0 0 13 13" style="left:990px;top:976.5px"><path d="M0.5 1.8Q0.5 0.5 1.8 0.5H9.6L12.5 3.2V12.3L10.8 11.2L9.3 12.4H3.9L2.4 11.2L0.5 12.4Z" fill="#8dbbeb" stroke="#4f89c9" stroke-width="0.9"/><text x="6.4" y="8.9" font-size="6.2" font-weight="bold" text-anchor="middle" fill="#1d3557" font-family="Liberation Sans, sans-serif" letter-spacing="-0.4">123</text></svg><span style="position:absolute;left:1007px;top:976.2px;font-size:9.5px;line-height:13.5px;color:#000;letter-spacing:-0.54px;white-space:nowrap;">Custom time frame to use (if custom tim...</span><span style="position:absolute;left:1170px;top:976.2px;font-size:9.5px;line-height:13.5px;color:#000;letter-spacing:-0.54px;white-space:nowrap;">0</span><div style="position:absolute;left:1167px;top:991.2px;width:1px;height:16.399999999999977px;background:#e4e4e4;"></div><svg width="13" height="13" viewBox="0 0 13 13" style="left:990px;top:992.9px"><path d="M0.5 1.8Q0.5 0.5 1.8 0.5H9.6L12.5 3.2V12.3L10.8 11.2L9.3 12.4H3.9L2.4 11.2L0.5 12.4Z" fill="#8dbbeb" stroke="#4f89c9" stroke-width="0.9"/><text x="6.4" y="8.9" font-size="6.2" font-weight="bold" text-anchor="middle" fill="#1d3557" font-family="Liberation Sans, sans-serif" letter-spacing="-0.4">123</text></svg><span style="position:absolute;left:1007px;top:992.7px;font-size:9.5px;line-height:13.5px;color:#000;letter-spacing:-0.54px;white-space:nowrap;">CMO period</span><span style="position:absolute;left:1170px;top:992.7px;font-size:9.5px;line-height:13.5px;color:#000;letter-spacing:-0.54px;white-space:nowrap;">10</span><div style="position:absolute;left:988px;top:1007.6px;width:359px;height:16.399999999999977px;background:#ebebeb;border-top:1px solid #c8c8c8;border-bottom:1px solid #c8c8c8;"></div><div style="position:absolute;left:1167px;top:1007.6px;width:1px;height:16.399999999999977px;background:#d0d0d0;"></div><svg width="13" height="13" viewBox="0 0 13 13" style="left:990px;top:1009.3px"><path d="M0.5 1.8Q0.5 0.5 1.8 0.5H9.6L12.5 3.2V12.3L10.8 11.2L9.3 12.4H3.9L2.4 11.2L0.5 12.4Z" fill="#8dbbeb" stroke="#4f89c9" stroke-width="0.9"/><text x="6.4" y="8.9" font-size="6.2" font-weight="bold" text-anchor="middle" fill="#1d3557" font-family="Liberation Sans, sans-serif" letter-spacing="-0.4">123</text></svg><span style="position:absolute;left:1007px;top:1009.0px;font-size:9.5px;line-height:13.5px;color:#000;letter-spacing:-0.54px;white-space:nowrap;">Smoothing period</span><span style="position:absolute;left:1170px;top:1009.0px;font-size:9.5px;line-height:13.5px;color:#000;letter-spacing:-0.54px;white-space:nowrap;">9</span><div style="position:absolute;left:1167px;top:1024px;width:1px;height:16.40000000000009px;background:#e4e4e4;"></div><svg width="13" height="13" viewBox="0 0 13 13" style="left:990px;top:1025.7px"><path d="M0.5 1.8Q0.5 0.5 1.8 0.5H9.6L12.5 3.2V12.3L10.8 11.2L9.3 12.4H3.9L2.4 11.2L0.5 12.4Z" fill="#6fd879" stroke="#35a344" stroke-width="0.9"/><path d="M2.8 8.2L6.2 4.6M6 7.2Q7.2 6.4 8 7.2T10.2 7.2" stroke="#176b25" stroke-width="1.2" fill="none"/></svg><span style="position:absolute;left:1007px;top:1025.5px;font-size:9.5px;line-height:13.5px;color:#000;letter-spacing:-0.54px;white-space:nowrap;">Show high line?</span><span style="position:absolute;left:1170px;top:1025.5px;font-size:9.5px;line-height:13.5px;color:#000;letter-spacing:-0.54px;white-space:nowrap;">true</span><div style="position:absolute;left:988px;top:1040.4px;width:359px;height:16.399999999999864px;background:#ebebeb;border-top:1px solid #c8c8c8;border-bottom:1px solid #c8c8c8;"></div><div style="position:absolute;left:1167px;top:1040.4px;width:1px;height:16.399999999999864px;background:#d0d0d0;"></div><svg width="13" height="13" viewBox="0 0 13 13" style="left:990px;top:1042.1px"><path d="M0.5 1.8Q0.5 0.5 1.8 0.5H9.6L12.5 3.2V12.3L10.8 11.2L9.3 12.4H3.9L2.4 11.2L0.5 12.4Z" fill="#6fd879" stroke="#35a344" stroke-width="0.9"/><path d="M2.8 8.2L6.2 4.6M6 7.2Q7.2 6.4 8 7.2T10.2 7.2" stroke="#176b25" stroke-width="1.2" fill="none"/></svg><span style="position:absolute;left:1007px;top:1041.8px;font-size:9.5px;line-height:13.5px;color:#000;letter-spacing:-0.54px;white-space:nowrap;">Show middle line?</span><span style="position:absolute;left:1170px;top:1041.8px;font-size:9.5px;line-height:13.5px;color:#000;letter-spacing:-0.54px;white-space:nowrap;">true</span><div style="position:absolute;left:1167px;top:1056.8px;width:1px;height:16.40000000000009px;background:#e4e4e4;"></div><svg width="13" height="13" viewBox="0 0 13 13" style="left:990px;top:1058.5px"><path d="M0.5 1.8Q0.5 0.5 1.8 0.5H9.6L12.5 3.2V12.3L10.8 11.2L9.3 12.4H3.9L2.4 11.2L0.5 12.4Z" fill="#6fd879" stroke="#35a344" stroke-width="0.9"/><path d="M2.8 8.2L6.2 4.6M6 7.2Q7.2 6.4 8 7.2T10.2 7.2" stroke="#176b25" stroke-width="1.2" fill="none"/></svg><span style="position:absolute;left:1007px;top:1058.2px;font-size:9.5px;line-height:13.5px;color:#000;letter-spacing:-0.54px;white-space:nowrap;">Show low line?</span><span style="position:absolute;left:1170px;top:1058.2px;font-size:9.5px;line-height:13.5px;color:#000;letter-spacing:-0.54px;white-space:nowrap;">true</span><div style="position:absolute;left:1167px;top:939px;width:1px;height:19px;background:#e4e4e4;"></div><div style="position:absolute;left:1347px;top:938.5px;width:15px;height:140px;background:#f0f0f0;"></div><div style="position:absolute;left:1348px;top:953.5px;width:13px;height:75px;background:#cdcdcd;"></div><svg width="8" height="6" viewBox="0 0 8 6" style="left:1350.5px;top:944px"><path d="M1 4.5L4 1.5L7 4.5" stroke="#505050" stroke-width="1.4" fill="none"/></svg><div style="position:absolute;left:1369px;top:1046.5px;width:84.5px;height:16px;background:#e1e1e1;border:1px solid #adadad;"></div><span style="position:absolute;left:1390.5px;top:1047.5px;font-size:10px;line-height:14px;color:#000;letter-spacing:-0.584px;white-space:nowrap;">Загрузить</span></div><svg width="1460" height="1066" viewBox="0 0 1460 1066" style="z-index:9"><line x1="285.8" y1="249" x2="430.5" y2="634" stroke="#ff0000" stroke-width="4.4" stroke-linecap="round"/><polygon points="436.5,650.5 422.8,634 435.2,628.8" fill="#ff0000"/><line x1="1197.5" y1="1003.5" x2="640" y2="933.2" stroke="#ff0000" stroke-width="3.4" stroke-linecap="round"/><polygon points="625,931.5 642.5,926.5 641,940" fill="#ff0000"/></svg>
</body></html>
